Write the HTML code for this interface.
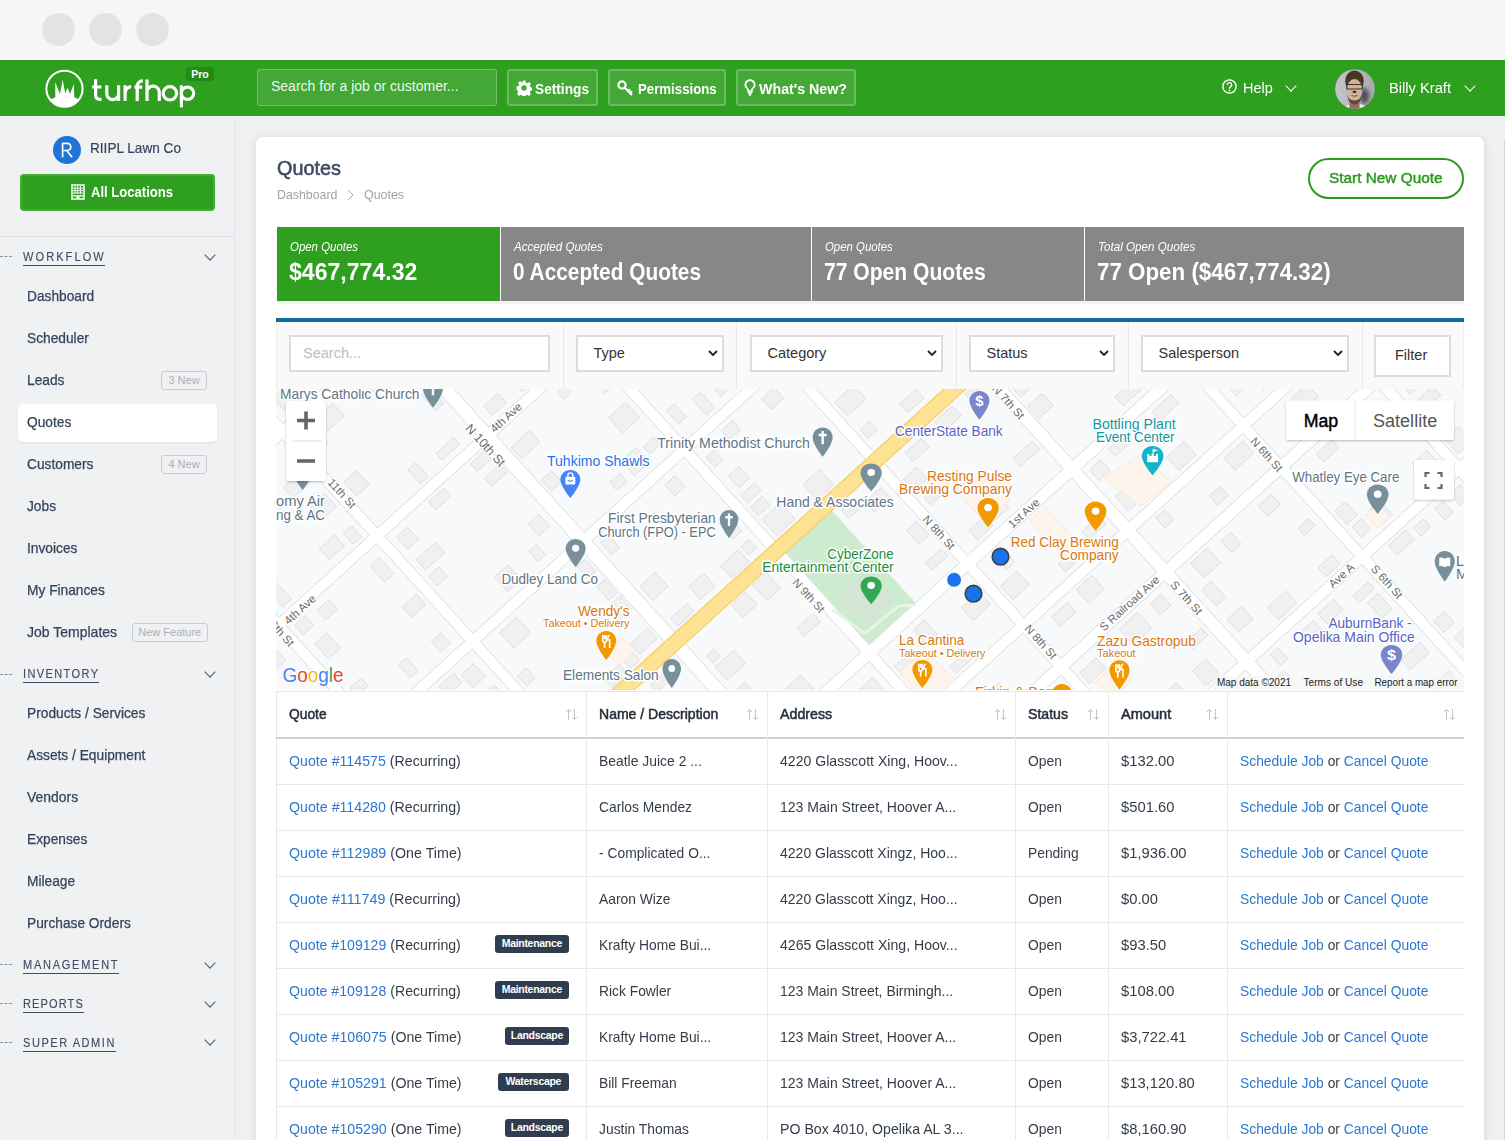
<!DOCTYPE html>
<html><head><meta charset="utf-8">
<style>
*{box-sizing:border-box;margin:0;padding:0}
html,body{width:1505px;height:1140px;overflow:hidden;background:#eef0f2;font-family:"Liberation Sans",sans-serif;color:#3a4656}
.abs{position:absolute}
.t{position:absolute;line-height:1;white-space:nowrap}
#topbar{position:absolute;left:0;top:0;width:1505px;height:60px;background:#f6f6f6}
.dot{position:absolute;top:13.4px;width:33px;height:33px;border-radius:50%;background:#e3e3e3}
#hdr{position:absolute;left:0;top:60px;width:1505px;height:56px;background:#2e9f1f}
.hb{position:absolute;top:69px;height:37px;border:2px solid rgba(255,255,255,.22);background:rgba(255,255,255,.1);border-radius:3px}
.hbt{position:absolute;top:82.5px;font-size:14px;font-weight:bold;color:#fff;line-height:1;white-space:nowrap;letter-spacing:-0.15px}
.chv{position:absolute;width:8px;height:8px;border-right:1.4px solid #fff;border-bottom:1.4px solid #fff;transform:rotate(45deg)}
#side{position:absolute;left:0;top:116px;width:235px;height:1024px;background:#f0f1f3;border-right:1px solid #e2e5ea}
.dash{position:absolute;left:0;width:12px;border-top:1px dashed #8a93a0}
.chev{position:absolute;left:206px;width:8px;height:8px;border-right:1.3px solid #4a566a;border-bottom:1.3px solid #4a566a;transform:rotate(45deg)}
.badge{position:absolute;height:19px;border:1px solid #c9ced6;border-radius:3px;font-size:11px;color:#a9b0ba;line-height:17px;text-align:center;white-space:nowrap}
#card{position:absolute;left:256px;top:137px;width:1228px;height:1020px;background:#fff;border-radius:7px;box-shadow:0 1px 9px rgba(0,0,0,.11)}
.lk{color:#2b78d2}
.bdg{position:absolute;height:17.5px;background:#2f3d4f;border-radius:3px;color:#fff;font-weight:bold;font-size:10.5px;line-height:17.5px;text-align:center;letter-spacing:-0.3px}
</style></head><body>
<div id="topbar"><div class="dot" style="left:42px"></div><div class="dot" style="left:89px"></div><div class="dot" style="left:136px"></div></div>
<div id="hdr"></div>
 <svg class="abs" style="left:0;top:0" width="100" height="116" viewBox="0 0 100 116">
  <circle cx="64.5" cy="88.75" r="18.1" fill="none" stroke="#fff" stroke-width="2"/>
  <path d="M49.9 99.5 L53 98.3 L55.3 97.4 L55.3 82.3 L60 94 L62.7 79.8 L65.2 93 L67.6 87.8 L70 94 L73.7 84.1 L74.4 97.3 L76.5 98.2 L79.1 99.5 A18.1 18.1 0 0 1 49.9 99.5 Z" fill="#fff"/>
 </svg>
 <div class="abs" style="left:186px;top:67px;width:28px;height:14px;background:#248a17;border-radius:3px;color:#fff;font-weight:bold;font-size:10.5px;line-height:14px;text-align:center">Pro</div>
 <div class="abs" style="left:257px;top:69px;width:240px;height:37px;border:1.5px solid rgba(255,255,255,.25);background:rgba(255,255,255,.1);border-radius:3px"></div>
 <div class="hb" style="left:507px;width:91px"></div>
 <div class="hb" style="left:608px;width:118px"></div>
 <div class="hb" style="left:736px;width:120px"></div>
 <svg class="abs" style="left:516px;top:80px" width="16" height="16" viewBox="0 0 16 16"><path fill="#fff" fill-rule="evenodd" d="M6.6 0.5h2.8l.4 2.1 1.4.6 1.8-1.2 2 2-1.2 1.8.6 1.4 2.1.4v2.8l-2.1.4-.6 1.4 1.2 1.8-2 2-1.8-1.2-1.4.6-.4 2.1H6.6l-.4-2.1-1.4-.6-1.8 1.2-2-2 1.2-1.8-.6-1.4L.5 9.4V6.6l2.1-.4.6-1.4L2 3 4 1l1.8 1.2 1.4-.6zM8 5.3A2.7 2.7 0 1 0 8 10.7 2.7 2.7 0 1 0 8 5.3z"/></svg>
 <svg class="abs" style="left:617px;top:80px" width="17" height="16" viewBox="0 0 17 16"><circle cx="5" cy="5" r="3.6" fill="none" stroke="#fff" stroke-width="2.2"/><path d="M7.5 7.5 L15 15 M11 11.2 L13 9.2 M13 13.2 L15 11.2" stroke="#fff" stroke-width="2.2" fill="none"/></svg>
 <svg class="abs" style="left:744px;top:79px" width="12" height="17" viewBox="0 0 12 17"><path d="M6 1.2a4.6 4.6 0 0 0-2.6 8.4c.5.4.8 1 .8 1.6v1.3h3.6v-1.3c0-.6.3-1.2.8-1.6A4.6 4.6 0 0 0 6 1.2z" fill="none" stroke="#fff" stroke-width="1.8"/><path d="M4.2 14.3h3.6M4.8 16h2.4" stroke="#fff" stroke-width="1.5"/></svg>
 <svg class="abs" style="left:1222px;top:79px" width="15" height="15" viewBox="0 0 15 15"><circle cx="7.5" cy="7.5" r="6.6" fill="none" stroke="#fff" stroke-width="1.4"/><path d="M5.3 5.8a2.2 2.2 0 1 1 3.2 2c-.7.4-1 .8-1 1.5v.4" fill="none" stroke="#fff" stroke-width="1.4"/><circle cx="7.5" cy="11.4" r=".9" fill="#fff"/></svg>
 <div class="chv" style="left:1287px;top:82px"></div>
 <svg class="abs" style="left:1335px;top:69px" width="40" height="40" viewBox="0 0 40 40">
  <defs><clipPath id="av"><circle cx="20" cy="20" r="19.8"/></clipPath>
  <filter id="bl" x="-50%" y="-50%" width="200%" height="200%"><feGaussianBlur stdDeviation="0.7"/></filter>
  <filter id="bl2" x="-50%" y="-50%" width="200%" height="200%"><feGaussianBlur stdDeviation="2"/></filter>
  <linearGradient id="avg" x1="0" x2="1" y1="0" y2="0"><stop offset="0" stop-color="#c4c5ca"/><stop offset="1" stop-color="#aaabb1"/></linearGradient></defs>
  <g clip-path="url(#av)">
   <rect width="40" height="40" fill="url(#avg)"/>
   <ellipse cx="29.5" cy="27" rx="4.5" ry="8" fill="#4a4a52" filter="url(#bl2)"/>
   <g filter="url(#bl)">
    <path d="M8 41 C9 37 13 35.5 17 35.5 L25 35.5 C29 35.5 31 37 32 41Z" fill="#eeecea"/>
    <rect x="14.5" y="30" width="10" height="11" fill="#8d6e5c"/>
    <ellipse cx="19.5" cy="12" rx="9.3" ry="10.5" fill="#4a3426"/><ellipse cx="19.5" cy="21" rx="7.8" ry="11" fill="#d3b29c"/><path d="M11.5 14 C13 9.5 16 8.5 19.5 8.5 C23 8.5 26 9.5 27.5 14 L28 9 C25 4 14 4 11 9Z" fill="#4a3426"/>
    <path d="M12 25 C12.5 32 16 35.5 19.5 35.5 C23 35.5 26.5 32 27 25 C26 30 23.5 31.5 19.5 31.5 C15.5 31.5 13 30 12 25Z" fill="#5e4636"/>
    
    <path d="M11.8 15.5h15.5v4.5h-15.5z" fill="none" stroke="#3a302c" stroke-width="1.1"/>
    <path d="M17.8 23.3 Q19.5 22 21.2 23.3" stroke="#2a1e1a" stroke-width="1.6" fill="none"/>
    <path d="M16.5 26.5 Q19.5 28 22.5 26.5" stroke="#7a4a48" stroke-width="1" fill="none"/>
   </g>
  </g>
 </svg>
 <div class="chv" style="left:1466px;top:82px"></div>
 <svg class="abs" style="left:0;top:0" width="210" height="116" viewBox="0 0 210 116"><g fill="none" stroke="#fff" stroke-width="3.2">
 <path d="M95.6 79.2V95.5Q95.6 99.4 101.6 99.4M92.2 87H101.4"/>
 <path d="M106.8 85.3V93.8A5.9 5.9 0 0 0 118.6 93.8M118.6 85.3V100.9"/>
 <path d="M125.1 85.3V100.9M125.1 93A6.4 6.4 0 0 1 131.2 86.6"/>
 <path d="M137.2 100.9V86.3A5.4 5.4 0 0 1 142.8 80.9M134.5 87.1H142.3"/>
 <path d="M147 79.5V100.9M147 92.3A6.15 6.15 0 0 1 159.3 92.3V100.9"/>
 <circle cx="169.9" cy="93.3" r="6.7"/>
 <path d="M181.4 85.3V107.4"/><circle cx="187.5" cy="93.3" r="6.2"/>
</g></svg>
 <div class="t" style="left:271px;top:79.3px;font-size:14px;color:rgba(255,255,255,.93)">Search for a job or customer...</div>
 <div class="t" style="left:534.6px;top:81.2px;font-size:15px;transform:scaleX(0.9126);transform-origin:0 0;color:#fff;font-weight:bold">Settings</div>
 <div class="t" style="left:638px;top:81.2px;font-size:15px;transform:scaleX(0.8822);transform-origin:0 0;color:#fff;font-weight:bold">Permissions</div>
 <div class="t" style="left:759px;top:81.2px;font-size:15px;transform:scaleX(0.9489);transform-origin:0 0;color:#fff;font-weight:bold">What's New?</div>
 <div class="t" style="left:1242.6px;top:80.2px;font-size:15px;transform:scaleX(0.9660);transform-origin:0 0;color:#fff">Help</div>
 <div class="t" style="left:1389px;top:80.2px;font-size:15px;transform:scaleX(0.9787);transform-origin:0 0;color:#fff">Billy Kraft</div>
<div id="side"></div>
 <div class="abs" style="left:53px;top:135.5px;width:28px;height:28px;border-radius:50%;background:#1f74d6"></div>
 <svg class="abs" style="left:0;top:0" width="90" height="170" viewBox="0 0 90 170"><path d="M62.6 156.6V143.3H67.2A3.6 3.6 0 0 1 67.2 150.5H63.2M66.6 150.5L71.6 156.6" fill="none" stroke="#fff" stroke-width="1.7" stroke-linecap="round" stroke-linejoin="round"/></svg>
 <div class="t" style="left:90px;top:140.7px;font-size:14.5px;transform:scaleX(0.9383);transform-origin:0 0;color:#34445a;-webkit-text-stroke:0.2px #34445a">RIIPL Lawn Co</div>
 <div class="abs" style="left:20px;top:174px;width:195px;height:37px;background:#2e9f1f;border:2px solid #45ab36;border-radius:4px"></div>
 <svg class="abs" style="left:71px;top:184px" width="14" height="16" viewBox="0 0 14 16"><rect x="1" y="1" width="12" height="14" fill="none" stroke="#fff" stroke-width="1.5"/><path d="M4 2v8M6.7 2v8M9.4 2v8M2 4.2h10M2 6.6h10M2 9h10" stroke="#fff" stroke-width="0.9"/><rect x="2" y="11.2" width="10" height="1.3" fill="#fff"/><rect x="5.5" y="12.3" width="3" height="2.5" fill="#fff"/></svg>
 <div class="t" style="left:91px;top:185.1px;font-size:14px;transform:scaleX(0.9329);transform-origin:0 0;color:#fff;font-weight:bold">All Locations</div>
 <div class="abs" style="left:0;top:236px;width:234px;height:1px;background:#dfe3e8"></div>
 <div class="dash" style="top:256.3px"></div>
 <div class="t" style="left:23px;top:250.6px;font-size:12.8px;letter-spacing:2.435px;transform:scaleX(0.86);transform-origin:0 0;color:#3e4d63;-webkit-text-stroke:0.15px #3e4d63">WORKFLOW</div>
 <div class="abs" style="left:23px;top:265px;width:81.9px;height:1.2px;background:#3e4d63"></div>
 <div class="chev" style="top:250.5px"></div>
 <div class="t" style="left:27px;top:288.8px;font-size:14.3px;transform:scaleX(0.9610);transform-origin:0 0;color:#33435a;-webkit-text-stroke:0.25px #33435a">Dashboard</div>
 <div class="t" style="left:27px;top:330.8px;font-size:14.3px;transform:scaleX(0.9610);transform-origin:0 0;color:#33435a;-webkit-text-stroke:0.25px #33435a">Scheduler</div>
 <div class="t" style="left:27px;top:372.8px;font-size:14.3px;transform:scaleX(0.9610);transform-origin:0 0;color:#33435a;-webkit-text-stroke:0.25px #33435a">Leads</div>
 <div class="abs" style="left:18px;top:404px;width:199px;height:38px;background:#fff;border-radius:5px;box-shadow:0 1px 2px rgba(0,0,0,.08)"></div>
 <div class="t" style="left:27px;top:414.8px;font-size:14.3px;transform:scaleX(0.9610);transform-origin:0 0;color:#33435a;-webkit-text-stroke:0.25px #33435a">Quotes</div>
 <div class="t" style="left:27px;top:456.8px;font-size:14.3px;transform:scaleX(0.9610);transform-origin:0 0;color:#33435a;-webkit-text-stroke:0.25px #33435a">Customers</div>
 <div class="t" style="left:27px;top:498.8px;font-size:14.3px;transform:scaleX(0.9610);transform-origin:0 0;color:#33435a;-webkit-text-stroke:0.25px #33435a">Jobs</div>
 <div class="t" style="left:27px;top:540.8px;font-size:14.3px;transform:scaleX(0.9610);transform-origin:0 0;color:#33435a;-webkit-text-stroke:0.25px #33435a">Invoices</div>
 <div class="t" style="left:27px;top:582.8px;font-size:14.3px;transform:scaleX(0.9610);transform-origin:0 0;color:#33435a;-webkit-text-stroke:0.25px #33435a">My Finances</div>
 <div class="t" style="left:27px;top:624.8px;font-size:14.3px;transform:scaleX(0.9803);transform-origin:0 0;color:#33435a;-webkit-text-stroke:0.25px #33435a">Job Templates</div>
 <div class="badge" style="left:161px;top:371.3px;width:46.0px">3 New</div>
 <div class="badge" style="left:161px;top:455.3px;width:46.0px">4 New</div>
 <div class="badge" style="left:132px;top:623.3px;width:75.5px">New Feature</div>
 <div class="dash" style="top:673.6px"></div>
 <div class="t" style="left:23px;top:667.9px;font-size:12.8px;letter-spacing:1.625px;transform:scaleX(0.86);transform-origin:0 0;color:#3e4d63;-webkit-text-stroke:0.15px #3e4d63">INVENTORY</div>
 <div class="abs" style="left:23px;top:682px;width:76.2px;height:1.2px;background:#3e4d63"></div>
 <div class="chev" style="top:667.8px"></div>
 <div class="t" style="left:27px;top:705.5px;font-size:14.3px;transform:scaleX(0.9610);transform-origin:0 0;color:#33435a;-webkit-text-stroke:0.25px #33435a">Products / Services</div>
 <div class="t" style="left:27px;top:747.5px;font-size:14.3px;transform:scaleX(0.9610);transform-origin:0 0;color:#33435a;-webkit-text-stroke:0.25px #33435a">Assets / Equipment</div>
 <div class="t" style="left:27px;top:789.5px;font-size:14.3px;transform:scaleX(0.9754);transform-origin:0 0;color:#33435a;-webkit-text-stroke:0.25px #33435a">Vendors</div>
 <div class="t" style="left:27px;top:831.5px;font-size:14.3px;transform:scaleX(0.9610);transform-origin:0 0;color:#33435a;-webkit-text-stroke:0.25px #33435a">Expenses</div>
 <div class="t" style="left:27px;top:873.5px;font-size:14.3px;transform:scaleX(0.9610);transform-origin:0 0;color:#33435a;-webkit-text-stroke:0.25px #33435a">Mileage</div>
 <div class="t" style="left:27px;top:915.5px;font-size:14.3px;transform:scaleX(0.9610);transform-origin:0 0;color:#33435a;-webkit-text-stroke:0.25px #33435a">Purchase Orders</div>
 <div class="dash" style="top:964.3px"></div>
 <div class="t" style="left:23px;top:958.6px;font-size:12.8px;letter-spacing:2.029px;transform:scaleX(0.86);transform-origin:0 0;color:#3e4d63;-webkit-text-stroke:0.15px #3e4d63">MANAGEMENT</div>
 <div class="abs" style="left:23px;top:973px;width:95.8px;height:1.2px;background:#3e4d63"></div>
 <div class="chev" style="top:958.5px"></div>
 <div class="dash" style="top:1003.3px"></div>
 <div class="t" style="left:23px;top:997.6px;font-size:12.8px;letter-spacing:1.315px;transform:scaleX(0.86);transform-origin:0 0;color:#3e4d63;-webkit-text-stroke:0.15px #3e4d63">REPORTS</div>
 <div class="abs" style="left:23px;top:1012px;width:61.0px;height:1.2px;background:#3e4d63"></div>
 <div class="chev" style="top:997.5px"></div>
 <div class="dash" style="top:1042.2px"></div>
 <div class="t" style="left:23px;top:1036.5px;font-size:12.8px;letter-spacing:1.808px;transform:scaleX(0.86);transform-origin:0 0;color:#3e4d63;-webkit-text-stroke:0.15px #3e4d63">SUPER ADMIN</div>
 <div class="abs" style="left:23px;top:1051px;width:92.6px;height:1.2px;background:#3e4d63"></div>
 <div class="chev" style="top:1036.4px"></div>
<div id="card"></div>
 <div class="t" style="left:276.5px;top:157.6px;font-size:20.5px;transform:scaleX(0.9653);transform-origin:0 0;color:#3d4c62;-webkit-text-stroke:0.6px #3d4c62">Quotes</div>
 <div class="t" style="left:276.8px;top:187.9px;font-size:13px;transform:scaleX(0.9497);transform-origin:0 0;color:#a3a3a3">Dashboard</div>
 <svg class="abs" style="left:346px;top:189px" width="9" height="12" viewBox="0 0 9 12"><path d="M2 1l5 5-5 5" fill="none" stroke="#a8a8a8" stroke-width="1"/></svg>
 <div class="t" style="left:364.2px;top:187.9px;font-size:13px;transform:scaleX(0.9543);transform-origin:0 0;color:#a3a3a3">Quotes</div>
 <div class="abs" style="left:1308px;top:158px;width:156px;height:41px;border:2px solid #2a9a1c;border-radius:21px"></div>
 <div class="t" style="left:1329.4px;top:169.9px;font-size:15.3px;transform:scaleX(1.0044);transform-origin:0 0;color:#2a9a1c;-webkit-text-stroke:0.45px #2a9a1c">Start New Quote</div>
 <div class="abs" style="left:277px;top:300px;width:1187px;height:4px;background:#f3f3f3"></div>
 <div class="abs" style="left:277px;top:227px;width:223px;height:74px;background:#2e9f1f"></div>
 <div class="t" style="left:290px;top:240.8px;font-size:12px;transform:scaleX(0.9527);transform-origin:0 0;color:#fff;font-style:italic">Open Quotes</div>
 <div class="t" style="left:289.3px;top:260.7px;font-size:23px;transform:scaleX(1.0031);transform-origin:0 0;color:#fff;font-weight:bold">$467,774.32</div>
 <div class="abs" style="left:501px;top:227px;width:310px;height:74px;background:#878787"></div>
 <div class="t" style="left:514px;top:240.8px;font-size:12px;transform:scaleX(0.9635);transform-origin:0 0;color:#fff;font-style:italic">Accepted Quotes</div>
 <div class="t" style="left:513.3px;top:260.7px;font-size:23px;transform:scaleX(0.9061);transform-origin:0 0;color:#fff;font-weight:bold">0 Accepted Quotes</div>
 <div class="abs" style="left:812px;top:227px;width:272px;height:74px;background:#878787"></div>
 <div class="t" style="left:825px;top:240.8px;font-size:12px;transform:scaleX(0.9499);transform-origin:0 0;color:#fff;font-style:italic">Open Quotes</div>
 <div class="t" style="left:824.3px;top:260.7px;font-size:23px;transform:scaleX(0.9168);transform-origin:0 0;color:#fff;font-weight:bold">77 Open Quotes</div>
 <div class="abs" style="left:1085px;top:227px;width:379px;height:74px;background:#878787"></div>
 <div class="t" style="left:1098px;top:240.8px;font-size:12px;transform:scaleX(0.9702);transform-origin:0 0;color:#fff;font-style:italic">Total Open Quotes</div>
 <div class="t" style="left:1097.3px;top:260.7px;font-size:23px;transform:scaleX(0.9718);transform-origin:0 0;color:#fff;font-weight:bold">77 Open ($467,774.32)</div>
 <div class="abs" style="left:276px;top:318px;width:1188px;height:4px;background:#0f6e98"></div>
 <div class="abs" style="left:276px;top:322px;width:1188px;height:68px;background:#f9f9f9;border-left:1px solid #ececec;border-right:1px solid #ececec"></div>
 <div class="abs" style="left:562.5px;top:322px;width:1px;height:67px;background:#e9e9e9"></div>
 <div class="abs" style="left:736.0px;top:322px;width:1px;height:67px;background:#e9e9e9"></div>
 <div class="abs" style="left:955.5px;top:322px;width:1px;height:67px;background:#e9e9e9"></div>
 <div class="abs" style="left:1127.5px;top:322px;width:1px;height:67px;background:#e9e9e9"></div>
 <div class="abs" style="left:1361.5px;top:322px;width:1px;height:67px;background:#e9e9e9"></div>
 <div class="abs" style="left:289px;top:335px;width:261px;height:37px;border:2px solid #dcdcdc;background:#fff"></div>
 <div class="t" style="left:303px;top:345.6px;font-size:14.5px;color:#bdbdbd">Search...</div>
 <div class="abs" style="left:575.5px;top:335px;width:148.5px;height:37px;border:2px solid #dcdcdc;background:#fff"></div>
 <div class="t" style="left:593.5px;top:346.0px;font-size:14.5px;color:#333">Type</div>
 <svg class="abs" style="left:708.0px;top:350px" width="10" height="7" viewBox="0 0 10 7"><path d="M1 1l4 4 4-4" fill="none" stroke="#222" stroke-width="1.8"/></svg>
 <div class="abs" style="left:749.5px;top:335px;width:193.0px;height:37px;border:2px solid #dcdcdc;background:#fff"></div>
 <div class="t" style="left:767.5px;top:346.0px;font-size:14.5px;color:#333">Category</div>
 <svg class="abs" style="left:926.5px;top:350px" width="10" height="7" viewBox="0 0 10 7"><path d="M1 1l4 4 4-4" fill="none" stroke="#222" stroke-width="1.8"/></svg>
 <div class="abs" style="left:968.5px;top:335px;width:146.5px;height:37px;border:2px solid #dcdcdc;background:#fff"></div>
 <div class="t" style="left:986.5px;top:346.0px;font-size:14.5px;color:#333">Status</div>
 <svg class="abs" style="left:1099.0px;top:350px" width="10" height="7" viewBox="0 0 10 7"><path d="M1 1l4 4 4-4" fill="none" stroke="#222" stroke-width="1.8"/></svg>
 <div class="abs" style="left:1140.5px;top:335px;width:208.5px;height:37px;border:2px solid #dcdcdc;background:#fff"></div>
 <div class="t" style="left:1158.5px;top:346.0px;font-size:14.5px;color:#333">Salesperson</div>
 <svg class="abs" style="left:1333.0px;top:350px" width="10" height="7" viewBox="0 0 10 7"><path d="M1 1l4 4 4-4" fill="none" stroke="#222" stroke-width="1.8"/></svg>
 <div class="abs" style="left:1374px;top:335px;width:77px;height:42px;border:2px solid #dcdcdc;background:#fff"></div>
 <div class="t" style="left:1395px;top:348.0px;font-size:14.5px;color:#333">Filter</div>
<svg class="abs" style="left:276px;top:389px" width="1188" height="301" viewBox="0 0 1188 301" font-family="Liberation Sans, sans-serif">
<rect width="1188" height="301" fill="#f8f9fa"/>
<g transform="rotate(-42.2)">
<rect x="260.0" y="463.0" width="70.0" height="135.0" fill="#cdeccf"/>
<rect x="-210.3" y="12.8" width="15.2" height="11.0" fill="#f0f0f1" stroke="#dcdde0" stroke-width="0.9"/>
<rect x="-192.0" y="-47.1" width="24.6" height="11.8" fill="#f0f0f1" stroke="#dcdde0" stroke-width="0.9"/>
<rect x="-247.7" y="5.3" width="19.0" height="21.3" fill="#f0f0f1" stroke="#dcdde0" stroke-width="0.9"/>
<rect x="-182.8" y="104.6" width="13.5" height="16.2" fill="#f0f0f1" stroke="#dcdde0" stroke-width="0.9"/>
<rect x="-214.8" y="46.1" width="20.9" height="10.3" fill="#f0f0f1" stroke="#dcdde0" stroke-width="0.9"/>
<rect x="-227.5" y="149.5" width="19.9" height="15.5" fill="#f0f0f1" stroke="#dcdde0" stroke-width="0.9"/>
<rect x="-188.8" y="154.6" width="14.0" height="11.3" fill="#f0f0f1" stroke="#dcdde0" stroke-width="0.9"/>
<rect x="-248.2" y="96.8" width="16.2" height="17.7" fill="#f0f0f1" stroke="#dcdde0" stroke-width="0.9"/>
<rect x="-245.2" y="149.5" width="13.5" height="12.7" fill="#f0f0f1" stroke="#dcdde0" stroke-width="0.9"/>
<rect x="-203.1" y="288.7" width="17.2" height="16.1" fill="#f0f0f1" stroke="#dcdde0" stroke-width="0.9"/>
<rect x="-249.6" y="210.4" width="25.8" height="17.9" fill="#f0f0f1" stroke="#dcdde0" stroke-width="0.9"/>
<rect x="-245.8" y="236.5" width="19.8" height="13.1" fill="#f0f0f1" stroke="#dcdde0" stroke-width="0.9"/>
<rect x="-244.7" y="286.2" width="23.9" height="21.4" fill="#f0f0f1" stroke="#dcdde0" stroke-width="0.9"/>
<rect x="-187.1" y="254.5" width="20.1" height="9.8" fill="#f0f0f1" stroke="#dcdde0" stroke-width="0.9"/>
<rect x="-186.9" y="191.4" width="11.6" height="16.4" fill="#f0f0f1" stroke="#dcdde0" stroke-width="0.9"/>
<rect x="-248.9" y="340.5" width="19.8" height="10.9" fill="#f0f0f1" stroke="#dcdde0" stroke-width="0.9"/>
<rect x="-184.7" y="400.0" width="17.8" height="21.7" fill="#f0f0f1" stroke="#dcdde0" stroke-width="0.9"/>
<rect x="-241.1" y="423.3" width="17.7" height="18.0" fill="#f0f0f1" stroke="#dcdde0" stroke-width="0.9"/>
<rect x="-216.6" y="432.5" width="18.7" height="9.4" fill="#f0f0f1" stroke="#dcdde0" stroke-width="0.9"/>
<rect x="-247.8" y="392.6" width="24.5" height="13.6" fill="#f0f0f1" stroke="#dcdde0" stroke-width="0.9"/>
<rect x="-249.6" y="485.2" width="22.6" height="18.9" fill="#f0f0f1" stroke="#dcdde0" stroke-width="0.9"/>
<rect x="-204.5" y="469.7" width="17.9" height="18.5" fill="#f0f0f1" stroke="#dcdde0" stroke-width="0.9"/>
<rect x="-246.2" y="564.5" width="25.3" height="14.8" fill="#f0f0f1" stroke="#dcdde0" stroke-width="0.9"/>
<rect x="-248.1" y="515.3" width="11.6" height="15.1" fill="#f0f0f1" stroke="#dcdde0" stroke-width="0.9"/>
<rect x="-184.7" y="511.7" width="12.9" height="19.3" fill="#f0f0f1" stroke="#dcdde0" stroke-width="0.9"/>
<rect x="-188.1" y="553.6" width="21.9" height="10.1" fill="#f0f0f1" stroke="#dcdde0" stroke-width="0.9"/>
<rect x="-249.4" y="606.9" width="12.3" height="19.7" fill="#f0f0f1" stroke="#dcdde0" stroke-width="0.9"/>
<rect x="-246.5" y="641.5" width="22.8" height="18.4" fill="#f0f0f1" stroke="#dcdde0" stroke-width="0.9"/>
<rect x="-182.9" y="631.7" width="13.4" height="12.3" fill="#f0f0f1" stroke="#dcdde0" stroke-width="0.9"/>
<rect x="-200.0" y="710.2" width="23.3" height="9.8" fill="#f0f0f1" stroke="#dcdde0" stroke-width="0.9"/>
<rect x="-247.9" y="798.2" width="24.1" height="10.7" fill="#f0f0f1" stroke="#dcdde0" stroke-width="0.9"/>
<rect x="-247.3" y="772.0" width="22.4" height="10.9" fill="#f0f0f1" stroke="#dcdde0" stroke-width="0.9"/>
<rect x="-238.2" y="742.6" width="18.3" height="16.2" fill="#f0f0f1" stroke="#dcdde0" stroke-width="0.9"/>
<rect x="-217.9" y="826.7" width="19.8" height="15.6" fill="#f0f0f1" stroke="#dcdde0" stroke-width="0.9"/>
<rect x="-191.3" y="747.6" width="14.0" height="15.8" fill="#f0f0f1" stroke="#dcdde0" stroke-width="0.9"/>
<rect x="-250.6" y="905.0" width="12.2" height="10.6" fill="#f0f0f1" stroke="#dcdde0" stroke-width="0.9"/>
<rect x="-241.0" y="1056.5" width="14.8" height="10.6" fill="#f0f0f1" stroke="#dcdde0" stroke-width="0.9"/>
<rect x="-192.5" y="893.3" width="24.1" height="21.6" fill="#f0f0f1" stroke="#dcdde0" stroke-width="0.9"/>
<rect x="-247.7" y="935.9" width="15.1" height="18.4" fill="#f0f0f1" stroke="#dcdde0" stroke-width="0.9"/>
<rect x="-186.2" y="863.7" width="18.3" height="12.8" fill="#f0f0f1" stroke="#dcdde0" stroke-width="0.9"/>
<rect x="-246.3" y="1023.3" width="11.7" height="12.5" fill="#f0f0f1" stroke="#dcdde0" stroke-width="0.9"/>
<rect x="-208.0" y="1050.0" width="23.6" height="17.8" fill="#f0f0f1" stroke="#dcdde0" stroke-width="0.9"/>
<rect x="-204.3" y="865.6" width="11.4" height="9.7" fill="#f0f0f1" stroke="#dcdde0" stroke-width="0.9"/>
<rect x="-250.9" y="866.6" width="18.0" height="11.3" fill="#f0f0f1" stroke="#dcdde0" stroke-width="0.9"/>
<rect x="-228.3" y="864.8" width="18.7" height="20.6" fill="#f0f0f1" stroke="#dcdde0" stroke-width="0.9"/>
<rect x="-71.0" y="-48.6" width="23.3" height="18.2" fill="#f0f0f1" stroke="#dcdde0" stroke-width="0.9"/>
<rect x="-56.5" y="9.5" width="10.2" height="17.1" fill="#f0f0f1" stroke="#dcdde0" stroke-width="0.9"/>
<rect x="-146.2" y="-33.4" width="20.7" height="12.7" fill="#f0f0f1" stroke="#dcdde0" stroke-width="0.9"/>
<rect x="-142.1" y="11.1" width="10.1" height="13.7" fill="#f0f0f1" stroke="#dcdde0" stroke-width="0.9"/>
<rect x="-145.3" y="-15.6" width="20.2" height="21.5" fill="#f0f0f1" stroke="#dcdde0" stroke-width="0.9"/>
<rect x="-143.2" y="115.8" width="20.9" height="15.4" fill="#f0f0f1" stroke="#dcdde0" stroke-width="0.9"/>
<rect x="-147.6" y="69.0" width="11.1" height="18.6" fill="#f0f0f1" stroke="#dcdde0" stroke-width="0.9"/>
<rect x="-75.2" y="147.3" width="20.4" height="15.0" fill="#f0f0f1" stroke="#dcdde0" stroke-width="0.9"/>
<rect x="-54.1" y="110.4" width="19.9" height="17.4" fill="#f0f0f1" stroke="#dcdde0" stroke-width="0.9"/>
<rect x="-47.1" y="151.9" width="11.4" height="15.1" fill="#f0f0f1" stroke="#dcdde0" stroke-width="0.9"/>
<rect x="-96.6" y="50.3" width="12.1" height="19.7" fill="#f0f0f1" stroke="#dcdde0" stroke-width="0.9"/>
<rect x="-60.8" y="77.8" width="24.0" height="14.1" fill="#f0f0f1" stroke="#dcdde0" stroke-width="0.9"/>
<rect x="-141.3" y="144.9" width="11.9" height="21.0" fill="#f0f0f1" stroke="#dcdde0" stroke-width="0.9"/>
<rect x="-142.4" y="214.9" width="16.2" height="20.3" fill="#f0f0f1" stroke="#dcdde0" stroke-width="0.9"/>
<rect x="-94.6" y="286.6" width="10.8" height="17.6" fill="#f0f0f1" stroke="#dcdde0" stroke-width="0.9"/>
<rect x="-54.6" y="291.3" width="13.0" height="13.9" fill="#f0f0f1" stroke="#dcdde0" stroke-width="0.9"/>
<rect x="-118.0" y="191.6" width="15.5" height="12.9" fill="#f0f0f1" stroke="#dcdde0" stroke-width="0.9"/>
<rect x="-52.9" y="246.3" width="18.9" height="14.1" fill="#f0f0f1" stroke="#dcdde0" stroke-width="0.9"/>
<rect x="-146.4" y="271.2" width="15.5" height="10.2" fill="#f0f0f1" stroke="#dcdde0" stroke-width="0.9"/>
<rect x="-49.3" y="194.4" width="12.4" height="21.6" fill="#f0f0f1" stroke="#dcdde0" stroke-width="0.9"/>
<rect x="-145.0" y="187.2" width="14.5" height="13.1" fill="#f0f0f1" stroke="#dcdde0" stroke-width="0.9"/>
<rect x="-54.6" y="336.2" width="16.6" height="17.4" fill="#f0f0f1" stroke="#dcdde0" stroke-width="0.9"/>
<rect x="-50.5" y="365.9" width="13.6" height="14.5" fill="#f0f0f1" stroke="#dcdde0" stroke-width="0.9"/>
<rect x="-49.4" y="434.6" width="16.3" height="9.1" fill="#f0f0f1" stroke="#dcdde0" stroke-width="0.9"/>
<rect x="-142.2" y="402.5" width="12.3" height="14.1" fill="#f0f0f1" stroke="#dcdde0" stroke-width="0.9"/>
<rect x="-145.2" y="433.5" width="21.3" height="11.5" fill="#f0f0f1" stroke="#dcdde0" stroke-width="0.9"/>
<rect x="-79.1" y="329.9" width="19.9" height="12.4" fill="#f0f0f1" stroke="#dcdde0" stroke-width="0.9"/>
<rect x="-143.3" y="369.5" width="15.2" height="13.2" fill="#f0f0f1" stroke="#dcdde0" stroke-width="0.9"/>
<rect x="-57.1" y="470.0" width="11.6" height="15.2" fill="#f0f0f1" stroke="#dcdde0" stroke-width="0.9"/>
<rect x="-110.2" y="470.0" width="13.7" height="9.7" fill="#f0f0f1" stroke="#dcdde0" stroke-width="0.9"/>
<rect x="-143.3" y="532.0" width="23.9" height="14.8" fill="#f0f0f1" stroke="#dcdde0" stroke-width="0.9"/>
<rect x="-130.7" y="561.7" width="21.7" height="20.9" fill="#f0f0f1" stroke="#dcdde0" stroke-width="0.9"/>
<rect x="-45.2" y="510.8" width="10.1" height="20.7" fill="#f0f0f1" stroke="#dcdde0" stroke-width="0.9"/>
<rect x="-89.2" y="468.8" width="12.6" height="9.2" fill="#f0f0f1" stroke="#dcdde0" stroke-width="0.9"/>
<rect x="-145.8" y="469.5" width="16.4" height="9.9" fill="#f0f0f1" stroke="#dcdde0" stroke-width="0.9"/>
<rect x="-144.3" y="486.4" width="22.5" height="9.3" fill="#f0f0f1" stroke="#dcdde0" stroke-width="0.9"/>
<rect x="-142.1" y="608.5" width="25.7" height="15.4" fill="#f0f0f1" stroke="#dcdde0" stroke-width="0.9"/>
<rect x="-50.0" y="609.6" width="15.6" height="18.8" fill="#f0f0f1" stroke="#dcdde0" stroke-width="0.9"/>
<rect x="-130.8" y="651.8" width="13.2" height="14.2" fill="#f0f0f1" stroke="#dcdde0" stroke-width="0.9"/>
<rect x="-96.5" y="655.3" width="22.6" height="10.5" fill="#f0f0f1" stroke="#dcdde0" stroke-width="0.9"/>
<rect x="-55.8" y="698.9" width="19.3" height="20.5" fill="#f0f0f1" stroke="#dcdde0" stroke-width="0.9"/>
<rect x="-147.1" y="696.7" width="15.9" height="13.9" fill="#f0f0f1" stroke="#dcdde0" stroke-width="0.9"/>
<rect x="-47.1" y="803.8" width="12.8" height="18.7" fill="#f0f0f1" stroke="#dcdde0" stroke-width="0.9"/>
<rect x="-116.7" y="833.0" width="12.1" height="12.0" fill="#f0f0f1" stroke="#dcdde0" stroke-width="0.9"/>
<rect x="-141.8" y="743.5" width="17.6" height="10.8" fill="#f0f0f1" stroke="#dcdde0" stroke-width="0.9"/>
<rect x="-143.1" y="797.0" width="12.3" height="17.7" fill="#f0f0f1" stroke="#dcdde0" stroke-width="0.9"/>
<rect x="-65.2" y="744.4" width="24.5" height="9.6" fill="#f0f0f1" stroke="#dcdde0" stroke-width="0.9"/>
<rect x="-63.7" y="825.6" width="11.7" height="17.0" fill="#f0f0f1" stroke="#dcdde0" stroke-width="0.9"/>
<rect x="-50.8" y="1002.5" width="12.8" height="13.0" fill="#f0f0f1" stroke="#dcdde0" stroke-width="0.9"/>
<rect x="-129.5" y="1046.6" width="10.1" height="20.0" fill="#f0f0f1" stroke="#dcdde0" stroke-width="0.9"/>
<rect x="-84.4" y="1053.3" width="25.9" height="12.4" fill="#f0f0f1" stroke="#dcdde0" stroke-width="0.9"/>
<rect x="-50.1" y="919.7" width="14.3" height="16.2" fill="#f0f0f1" stroke="#dcdde0" stroke-width="0.9"/>
<rect x="-145.0" y="1020.7" width="24.9" height="20.6" fill="#f0f0f1" stroke="#dcdde0" stroke-width="0.9"/>
<rect x="-109.3" y="864.2" width="13.2" height="11.1" fill="#f0f0f1" stroke="#dcdde0" stroke-width="0.9"/>
<rect x="-137.4" y="864.0" width="16.3" height="16.6" fill="#f0f0f1" stroke="#dcdde0" stroke-width="0.9"/>
<rect x="-147.8" y="998.6" width="24.9" height="13.5" fill="#f0f0f1" stroke="#dcdde0" stroke-width="0.9"/>
<rect x="-65.7" y="865.2" width="21.8" height="9.9" fill="#f0f0f1" stroke="#dcdde0" stroke-width="0.9"/>
<rect x="-145.8" y="1049.7" width="12.1" height="19.3" fill="#f0f0f1" stroke="#dcdde0" stroke-width="0.9"/>
<rect x="-57.2" y="956.1" width="19.9" height="9.4" fill="#f0f0f1" stroke="#dcdde0" stroke-width="0.9"/>
<rect x="-146.0" y="962.3" width="21.0" height="12.3" fill="#f0f0f1" stroke="#dcdde0" stroke-width="0.9"/>
<rect x="-142.3" y="895.0" width="19.6" height="13.5" fill="#f0f0f1" stroke="#dcdde0" stroke-width="0.9"/>
<rect x="-50.8" y="1041.5" width="16.7" height="18.1" fill="#f0f0f1" stroke="#dcdde0" stroke-width="0.9"/>
<rect x="89.6" y="-48.6" width="18.4" height="11.8" fill="#f0f0f1" stroke="#dcdde0" stroke-width="0.9"/>
<rect x="-10.8" y="-30.3" width="11.1" height="19.4" fill="#f0f0f1" stroke="#dcdde0" stroke-width="0.9"/>
<rect x="94.4" y="-11.1" width="17.5" height="19.2" fill="#f0f0f1" stroke="#dcdde0" stroke-width="0.9"/>
<rect x="39.5" y="3.6" width="17.7" height="19.5" fill="#f0f0f1" stroke="#dcdde0" stroke-width="0.9"/>
<rect x="-8.2" y="4.1" width="16.9" height="17.3" fill="#f0f0f1" stroke="#dcdde0" stroke-width="0.9"/>
<rect x="55.9" y="45.8" width="23.2" height="20.8" fill="#f0f0f1" stroke="#dcdde0" stroke-width="0.9"/>
<rect x="-11.1" y="65.9" width="13.4" height="9.9" fill="#f0f0f1" stroke="#dcdde0" stroke-width="0.9"/>
<rect x="-12.3" y="114.2" width="17.2" height="19.2" fill="#f0f0f1" stroke="#dcdde0" stroke-width="0.9"/>
<rect x="75.2" y="155.2" width="23.8" height="9.1" fill="#f0f0f1" stroke="#dcdde0" stroke-width="0.9"/>
<rect x="-12.3" y="45.5" width="16.0" height="14.4" fill="#f0f0f1" stroke="#dcdde0" stroke-width="0.9"/>
<rect x="43.4" y="148.6" width="10.7" height="18.6" fill="#f0f0f1" stroke="#dcdde0" stroke-width="0.9"/>
<rect x="99.3" y="59.2" width="15.5" height="11.6" fill="#f0f0f1" stroke="#dcdde0" stroke-width="0.9"/>
<rect x="7.9" y="48.8" width="24.6" height="17.0" fill="#f0f0f1" stroke="#dcdde0" stroke-width="0.9"/>
<rect x="103.6" y="102.1" width="11.6" height="21.1" fill="#f0f0f1" stroke="#dcdde0" stroke-width="0.9"/>
<rect x="-12.8" y="241.1" width="14.1" height="12.9" fill="#f0f0f1" stroke="#dcdde0" stroke-width="0.9"/>
<rect x="35.5" y="286.1" width="18.4" height="19.7" fill="#f0f0f1" stroke="#dcdde0" stroke-width="0.9"/>
<rect x="78.1" y="290.1" width="10.2" height="14.0" fill="#f0f0f1" stroke="#dcdde0" stroke-width="0.9"/>
<rect x="93.5" y="186.2" width="18.8" height="10.1" fill="#f0f0f1" stroke="#dcdde0" stroke-width="0.9"/>
<rect x="37.1" y="186.2" width="20.9" height="10.6" fill="#f0f0f1" stroke="#dcdde0" stroke-width="0.9"/>
<rect x="96.1" y="269.2" width="14.4" height="16.4" fill="#f0f0f1" stroke="#dcdde0" stroke-width="0.9"/>
<rect x="-10.0" y="190.5" width="14.6" height="16.5" fill="#f0f0f1" stroke="#dcdde0" stroke-width="0.9"/>
<rect x="-10.9" y="220.6" width="26.0" height="13.9" fill="#f0f0f1" stroke="#dcdde0" stroke-width="0.9"/>
<rect x="94.2" y="206.5" width="21.3" height="10.2" fill="#f0f0f1" stroke="#dcdde0" stroke-width="0.9"/>
<rect x="91.4" y="427.0" width="23.6" height="13.8" fill="#f0f0f1" stroke="#dcdde0" stroke-width="0.9"/>
<rect x="103.5" y="333.7" width="10.9" height="16.2" fill="#f0f0f1" stroke="#dcdde0" stroke-width="0.9"/>
<rect x="75.0" y="426.4" width="12.3" height="18.8" fill="#f0f0f1" stroke="#dcdde0" stroke-width="0.9"/>
<rect x="-14.0" y="374.7" width="11.7" height="13.2" fill="#f0f0f1" stroke="#dcdde0" stroke-width="0.9"/>
<rect x="2.2" y="330.8" width="22.9" height="20.9" fill="#f0f0f1" stroke="#dcdde0" stroke-width="0.9"/>
<rect x="98.0" y="384.4" width="17.6" height="17.2" fill="#f0f0f1" stroke="#dcdde0" stroke-width="0.9"/>
<rect x="2.5" y="429.9" width="11.6" height="12.8" fill="#f0f0f1" stroke="#dcdde0" stroke-width="0.9"/>
<rect x="104.6" y="361.7" width="11.1" height="18.5" fill="#f0f0f1" stroke="#dcdde0" stroke-width="0.9"/>
<rect x="48.6" y="434.6" width="20.6" height="12.2" fill="#f0f0f1" stroke="#dcdde0" stroke-width="0.9"/>
<rect x="61.7" y="570.9" width="23.7" height="13.6" fill="#f0f0f1" stroke="#dcdde0" stroke-width="0.9"/>
<rect x="-10.4" y="494.1" width="23.1" height="20.3" fill="#f0f0f1" stroke="#dcdde0" stroke-width="0.9"/>
<rect x="-14.5" y="467.1" width="11.7" height="18.5" fill="#f0f0f1" stroke="#dcdde0" stroke-width="0.9"/>
<rect x="87.4" y="518.0" width="24.8" height="18.6" fill="#f0f0f1" stroke="#dcdde0" stroke-width="0.9"/>
<rect x="36.2" y="469.3" width="21.2" height="10.3" fill="#f0f0f1" stroke="#dcdde0" stroke-width="0.9"/>
<rect x="-14.0" y="552.1" width="19.4" height="18.9" fill="#f0f0f1" stroke="#dcdde0" stroke-width="0.9"/>
<rect x="97.3" y="551.9" width="13.8" height="13.4" fill="#f0f0f1" stroke="#dcdde0" stroke-width="0.9"/>
<rect x="78.6" y="470.7" width="23.6" height="9.7" fill="#f0f0f1" stroke="#dcdde0" stroke-width="0.9"/>
<rect x="-13.6" y="521.0" width="20.6" height="9.2" fill="#f0f0f1" stroke="#dcdde0" stroke-width="0.9"/>
<rect x="82.7" y="607.7" width="10.3" height="10.8" fill="#f0f0f1" stroke="#dcdde0" stroke-width="0.9"/>
<rect x="90.3" y="631.0" width="24.1" height="20.5" fill="#f0f0f1" stroke="#dcdde0" stroke-width="0.9"/>
<rect x="-14.0" y="655.8" width="22.9" height="9.5" fill="#f0f0f1" stroke="#dcdde0" stroke-width="0.9"/>
<rect x="60.9" y="604.7" width="14.4" height="18.6" fill="#f0f0f1" stroke="#dcdde0" stroke-width="0.9"/>
<rect x="99.1" y="702.2" width="13.2" height="18.2" fill="#f0f0f1" stroke="#dcdde0" stroke-width="0.9"/>
<rect x="-10.3" y="709.7" width="11.0" height="14.0" fill="#f0f0f1" stroke="#dcdde0" stroke-width="0.9"/>
<rect x="-10.7" y="792.4" width="20.8" height="21.1" fill="#f0f0f1" stroke="#dcdde0" stroke-width="0.9"/>
<rect x="14.1" y="820.9" width="23.6" height="19.7" fill="#f0f0f1" stroke="#dcdde0" stroke-width="0.9"/>
<rect x="70.0" y="827.2" width="20.1" height="17.2" fill="#f0f0f1" stroke="#dcdde0" stroke-width="0.9"/>
<rect x="91.9" y="773.4" width="19.7" height="13.9" fill="#f0f0f1" stroke="#dcdde0" stroke-width="0.9"/>
<rect x="-4.5" y="744.6" width="14.8" height="16.0" fill="#f0f0f1" stroke="#dcdde0" stroke-width="0.9"/>
<rect x="88.3" y="747.0" width="24.7" height="13.2" fill="#f0f0f1" stroke="#dcdde0" stroke-width="0.9"/>
<rect x="85.4" y="802.9" width="25.9" height="17.3" fill="#f0f0f1" stroke="#dcdde0" stroke-width="0.9"/>
<rect x="-14.1" y="899.8" width="18.8" height="20.9" fill="#f0f0f1" stroke="#dcdde0" stroke-width="0.9"/>
<rect x="-10.8" y="973.2" width="18.0" height="16.2" fill="#f0f0f1" stroke="#dcdde0" stroke-width="0.9"/>
<rect x="-10.1" y="878.0" width="16.6" height="10.6" fill="#f0f0f1" stroke="#dcdde0" stroke-width="0.9"/>
<rect x="-12.1" y="994.9" width="25.2" height="15.4" fill="#f0f0f1" stroke="#dcdde0" stroke-width="0.9"/>
<rect x="-13.0" y="1032.4" width="19.3" height="10.9" fill="#f0f0f1" stroke="#dcdde0" stroke-width="0.9"/>
<rect x="93.9" y="981.5" width="19.4" height="11.3" fill="#f0f0f1" stroke="#dcdde0" stroke-width="0.9"/>
<rect x="28.9" y="864.5" width="25.4" height="15.4" fill="#f0f0f1" stroke="#dcdde0" stroke-width="0.9"/>
<rect x="-9.5" y="931.0" width="16.4" height="18.3" fill="#f0f0f1" stroke="#dcdde0" stroke-width="0.9"/>
<rect x="102.3" y="925.6" width="13.0" height="21.6" fill="#f0f0f1" stroke="#dcdde0" stroke-width="0.9"/>
<rect x="92.3" y="898.7" width="20.4" height="21.5" fill="#f0f0f1" stroke="#dcdde0" stroke-width="0.9"/>
<rect x="84.5" y="1056.1" width="12.1" height="11.6" fill="#f0f0f1" stroke="#dcdde0" stroke-width="0.9"/>
<rect x="52.7" y="1053.7" width="17.6" height="11.7" fill="#f0f0f1" stroke="#dcdde0" stroke-width="0.9"/>
<rect x="84.5" y="865.4" width="17.0" height="21.9" fill="#f0f0f1" stroke="#dcdde0" stroke-width="0.9"/>
<rect x="-11.3" y="1050.7" width="12.0" height="15.7" fill="#f0f0f1" stroke="#dcdde0" stroke-width="0.9"/>
<rect x="6.5" y="1057.6" width="20.6" height="10.4" fill="#f0f0f1" stroke="#dcdde0" stroke-width="0.9"/>
<rect x="229.1" y="-23.6" width="21.5" height="10.1" fill="#f0f0f1" stroke="#dcdde0" stroke-width="0.9"/>
<rect x="150.7" y="7.1" width="24.5" height="19.1" fill="#f0f0f1" stroke="#dcdde0" stroke-width="0.9"/>
<rect x="202.0" y="-49.9" width="23.5" height="13.6" fill="#f0f0f1" stroke="#dcdde0" stroke-width="0.9"/>
<rect x="240.5" y="-0.4" width="10.6" height="9.5" fill="#f0f0f1" stroke="#dcdde0" stroke-width="0.9"/>
<rect x="205.8" y="8.5" width="18.8" height="17.2" fill="#f0f0f1" stroke="#dcdde0" stroke-width="0.9"/>
<rect x="228.5" y="153.0" width="14.1" height="14.7" fill="#f0f0f1" stroke="#dcdde0" stroke-width="0.9"/>
<rect x="209.2" y="50.8" width="24.0" height="16.6" fill="#f0f0f1" stroke="#dcdde0" stroke-width="0.9"/>
<rect x="138.6" y="49.7" width="13.3" height="17.8" fill="#f0f0f1" stroke="#dcdde0" stroke-width="0.9"/>
<rect x="137.3" y="101.1" width="21.2" height="19.5" fill="#f0f0f1" stroke="#dcdde0" stroke-width="0.9"/>
<rect x="237.8" y="60.5" width="14.0" height="9.8" fill="#f0f0f1" stroke="#dcdde0" stroke-width="0.9"/>
<rect x="180.5" y="155.5" width="14.5" height="11.6" fill="#f0f0f1" stroke="#dcdde0" stroke-width="0.9"/>
<rect x="142.4" y="152.1" width="19.1" height="12.8" fill="#f0f0f1" stroke="#dcdde0" stroke-width="0.9"/>
<rect x="228.7" y="116.5" width="22.5" height="13.2" fill="#f0f0f1" stroke="#dcdde0" stroke-width="0.9"/>
<rect x="240.9" y="205.3" width="11.3" height="18.7" fill="#f0f0f1" stroke="#dcdde0" stroke-width="0.9"/>
<rect x="207.3" y="285.3" width="20.2" height="20.0" fill="#f0f0f1" stroke="#dcdde0" stroke-width="0.9"/>
<rect x="233.4" y="289.4" width="14.1" height="9.8" fill="#f0f0f1" stroke="#dcdde0" stroke-width="0.9"/>
<rect x="134.9" y="201.1" width="25.1" height="15.4" fill="#f0f0f1" stroke="#dcdde0" stroke-width="0.9"/>
<rect x="184.5" y="293.3" width="13.6" height="10.8" fill="#f0f0f1" stroke="#dcdde0" stroke-width="0.9"/>
<rect x="205.8" y="191.0" width="11.2" height="9.7" fill="#f0f0f1" stroke="#dcdde0" stroke-width="0.9"/>
<rect x="227.1" y="244.5" width="23.2" height="20.8" fill="#f0f0f1" stroke="#dcdde0" stroke-width="0.9"/>
<rect x="135.4" y="245.8" width="13.8" height="14.7" fill="#f0f0f1" stroke="#dcdde0" stroke-width="0.9"/>
<rect x="238.0" y="398.1" width="11.8" height="20.2" fill="#f0f0f1" stroke="#dcdde0" stroke-width="0.9"/>
<rect x="223.7" y="332.2" width="13.6" height="15.0" fill="#f0f0f1" stroke="#dcdde0" stroke-width="0.9"/>
<rect x="137.0" y="390.4" width="20.9" height="19.4" fill="#f0f0f1" stroke="#dcdde0" stroke-width="0.9"/>
<rect x="138.0" y="434.8" width="22.4" height="10.8" fill="#f0f0f1" stroke="#dcdde0" stroke-width="0.9"/>
<rect x="210.4" y="429.7" width="24.0" height="16.3" fill="#f0f0f1" stroke="#dcdde0" stroke-width="0.9"/>
<rect x="137.3" y="331.5" width="10.7" height="16.8" fill="#f0f0f1" stroke="#dcdde0" stroke-width="0.9"/>
<rect x="173.0" y="423.8" width="19.9" height="17.4" fill="#f0f0f1" stroke="#dcdde0" stroke-width="0.9"/>
<rect x="238.8" y="429.0" width="10.7" height="11.2" fill="#f0f0f1" stroke="#dcdde0" stroke-width="0.9"/>
<rect x="135.4" y="532.3" width="15.0" height="13.4" fill="#f0f0f1" stroke="#dcdde0" stroke-width="0.9"/>
<rect x="225.4" y="527.1" width="21.6" height="10.9" fill="#f0f0f1" stroke="#dcdde0" stroke-width="0.9"/>
<rect x="221.7" y="465.2" width="18.5" height="21.4" fill="#f0f0f1" stroke="#dcdde0" stroke-width="0.9"/>
<rect x="138.6" y="500.8" width="25.0" height="17.9" fill="#f0f0f1" stroke="#dcdde0" stroke-width="0.9"/>
<rect x="172.3" y="564.2" width="24.3" height="19.5" fill="#f0f0f1" stroke="#dcdde0" stroke-width="0.9"/>
<rect x="192.4" y="465.4" width="19.2" height="17.6" fill="#f0f0f1" stroke="#dcdde0" stroke-width="0.9"/>
<rect x="139.8" y="554.2" width="14.9" height="13.6" fill="#f0f0f1" stroke="#dcdde0" stroke-width="0.9"/>
<rect x="139.4" y="486.7" width="10.3" height="9.6" fill="#f0f0f1" stroke="#dcdde0" stroke-width="0.9"/>
<rect x="203.9" y="641.6" width="21.7" height="21.5" fill="#f0f0f1" stroke="#dcdde0" stroke-width="0.9"/>
<rect x="157.1" y="603.1" width="10.1" height="12.5" fill="#f0f0f1" stroke="#dcdde0" stroke-width="0.9"/>
<rect x="152.1" y="645.2" width="15.2" height="18.7" fill="#f0f0f1" stroke="#dcdde0" stroke-width="0.9"/>
<rect x="224.5" y="614.7" width="23.8" height="19.4" fill="#f0f0f1" stroke="#dcdde0" stroke-width="0.9"/>
<rect x="176.2" y="689.4" width="17.4" height="9.2" fill="#f0f0f1" stroke="#dcdde0" stroke-width="0.9"/>
<rect x="134.1" y="692.5" width="21.4" height="19.9" fill="#f0f0f1" stroke="#dcdde0" stroke-width="0.9"/>
<rect x="157.7" y="830.6" width="15.8" height="13.5" fill="#f0f0f1" stroke="#dcdde0" stroke-width="0.9"/>
<rect x="229.2" y="788.7" width="19.9" height="19.6" fill="#f0f0f1" stroke="#dcdde0" stroke-width="0.9"/>
<rect x="135.5" y="799.1" width="15.8" height="15.9" fill="#f0f0f1" stroke="#dcdde0" stroke-width="0.9"/>
<rect x="224.5" y="743.4" width="22.4" height="13.7" fill="#f0f0f1" stroke="#dcdde0" stroke-width="0.9"/>
<rect x="227.0" y="829.7" width="20.0" height="10.6" fill="#f0f0f1" stroke="#dcdde0" stroke-width="0.9"/>
<rect x="140.7" y="742.2" width="16.2" height="11.8" fill="#f0f0f1" stroke="#dcdde0" stroke-width="0.9"/>
<rect x="232.1" y="761.4" width="15.7" height="13.2" fill="#f0f0f1" stroke="#dcdde0" stroke-width="0.9"/>
<rect x="216.2" y="868.2" width="19.1" height="11.0" fill="#f0f0f1" stroke="#dcdde0" stroke-width="0.9"/>
<rect x="237.5" y="904.3" width="14.5" height="13.3" fill="#f0f0f1" stroke="#dcdde0" stroke-width="0.9"/>
<rect x="153.7" y="1051.6" width="10.8" height="19.2" fill="#f0f0f1" stroke="#dcdde0" stroke-width="0.9"/>
<rect x="134.1" y="887.8" width="23.8" height="21.9" fill="#f0f0f1" stroke="#dcdde0" stroke-width="0.9"/>
<rect x="194.6" y="868.3" width="15.4" height="20.9" fill="#f0f0f1" stroke="#dcdde0" stroke-width="0.9"/>
<rect x="236.2" y="996.3" width="13.2" height="17.2" fill="#f0f0f1" stroke="#dcdde0" stroke-width="0.9"/>
<rect x="228.5" y="1060.7" width="21.7" height="9.6" fill="#f0f0f1" stroke="#dcdde0" stroke-width="0.9"/>
<rect x="137.2" y="968.4" width="18.4" height="9.0" fill="#f0f0f1" stroke="#dcdde0" stroke-width="0.9"/>
<rect x="139.8" y="999.4" width="23.4" height="21.4" fill="#f0f0f1" stroke="#dcdde0" stroke-width="0.9"/>
<rect x="134.4" y="943.3" width="14.4" height="11.3" fill="#f0f0f1" stroke="#dcdde0" stroke-width="0.9"/>
<rect x="230.2" y="969.6" width="18.9" height="13.7" fill="#f0f0f1" stroke="#dcdde0" stroke-width="0.9"/>
<rect x="186.9" y="1046.8" width="21.0" height="21.8" fill="#f0f0f1" stroke="#dcdde0" stroke-width="0.9"/>
<rect x="158.6" y="868.3" width="16.1" height="11.0" fill="#f0f0f1" stroke="#dcdde0" stroke-width="0.9"/>
<rect x="229.1" y="929.1" width="19.5" height="21.9" fill="#f0f0f1" stroke="#dcdde0" stroke-width="0.9"/>
<rect x="275.0" y="-15.6" width="11.0" height="21.7" fill="#f0f0f1" stroke="#dcdde0" stroke-width="0.9"/>
<rect x="353.6" y="9.6" width="18.7" height="11.9" fill="#f0f0f1" stroke="#dcdde0" stroke-width="0.9"/>
<rect x="323.1" y="9.9" width="15.6" height="16.7" fill="#f0f0f1" stroke="#dcdde0" stroke-width="0.9"/>
<rect x="362.6" y="-40.6" width="18.4" height="19.6" fill="#f0f0f1" stroke="#dcdde0" stroke-width="0.9"/>
<rect x="362.3" y="-6.3" width="23.1" height="10.6" fill="#f0f0f1" stroke="#dcdde0" stroke-width="0.9"/>
<rect x="338.2" y="153.0" width="18.4" height="12.9" fill="#f0f0f1" stroke="#dcdde0" stroke-width="0.9"/>
<rect x="306.9" y="49.6" width="17.2" height="15.2" fill="#f0f0f1" stroke="#dcdde0" stroke-width="0.9"/>
<rect x="273.0" y="106.5" width="18.3" height="12.1" fill="#f0f0f1" stroke="#dcdde0" stroke-width="0.9"/>
<rect x="297.8" y="152.1" width="10.0" height="12.4" fill="#f0f0f1" stroke="#dcdde0" stroke-width="0.9"/>
<rect x="360.7" y="49.4" width="22.7" height="17.0" fill="#f0f0f1" stroke="#dcdde0" stroke-width="0.9"/>
<rect x="370.4" y="95.9" width="13.3" height="20.2" fill="#f0f0f1" stroke="#dcdde0" stroke-width="0.9"/>
<rect x="272.3" y="55.5" width="22.3" height="19.0" fill="#f0f0f1" stroke="#dcdde0" stroke-width="0.9"/>
<rect x="321.0" y="144.8" width="11.4" height="18.8" fill="#f0f0f1" stroke="#dcdde0" stroke-width="0.9"/>
<rect x="274.5" y="278.4" width="10.9" height="18.0" fill="#f0f0f1" stroke="#dcdde0" stroke-width="0.9"/>
<rect x="324.4" y="290.7" width="12.3" height="13.3" fill="#f0f0f1" stroke="#dcdde0" stroke-width="0.9"/>
<rect x="341.6" y="293.6" width="11.4" height="14.0" fill="#f0f0f1" stroke="#dcdde0" stroke-width="0.9"/>
<rect x="367.9" y="208.3" width="14.9" height="12.2" fill="#f0f0f1" stroke="#dcdde0" stroke-width="0.9"/>
<rect x="273.8" y="225.3" width="10.8" height="16.0" fill="#f0f0f1" stroke="#dcdde0" stroke-width="0.9"/>
<rect x="301.3" y="287.3" width="11.1" height="21.4" fill="#f0f0f1" stroke="#dcdde0" stroke-width="0.9"/>
<rect x="353.9" y="186.4" width="13.3" height="11.3" fill="#f0f0f1" stroke="#dcdde0" stroke-width="0.9"/>
<rect x="367.2" y="265.3" width="17.5" height="11.6" fill="#f0f0f1" stroke="#dcdde0" stroke-width="0.9"/>
<rect x="352.9" y="333.5" width="17.1" height="14.5" fill="#f0f0f1" stroke="#dcdde0" stroke-width="0.9"/>
<rect x="302.1" y="329.9" width="14.7" height="12.0" fill="#f0f0f1" stroke="#dcdde0" stroke-width="0.9"/>
<rect x="276.7" y="368.3" width="14.1" height="16.1" fill="#f0f0f1" stroke="#dcdde0" stroke-width="0.9"/>
<rect x="272.6" y="423.3" width="24.8" height="21.9" fill="#f0f0f1" stroke="#dcdde0" stroke-width="0.9"/>
<rect x="326.3" y="424.8" width="22.5" height="20.6" fill="#f0f0f1" stroke="#dcdde0" stroke-width="0.9"/>
<rect x="272.6" y="391.0" width="18.7" height="10.1" fill="#f0f0f1" stroke="#dcdde0" stroke-width="0.9"/>
<rect x="272.5" y="339.6" width="10.8" height="13.3" fill="#f0f0f1" stroke="#dcdde0" stroke-width="0.9"/>
<rect x="272.2" y="406.1" width="15.9" height="11.6" fill="#f0f0f1" stroke="#dcdde0" stroke-width="0.9"/>
<rect x="372.1" y="528.2" width="13.7" height="18.8" fill="#f0f0f1" stroke="#dcdde0" stroke-width="0.9"/>
<rect x="337.4" y="469.6" width="18.2" height="11.2" fill="#f0f0f1" stroke="#dcdde0" stroke-width="0.9"/>
<rect x="364.4" y="565.0" width="21.3" height="9.9" fill="#f0f0f1" stroke="#dcdde0" stroke-width="0.9"/>
<rect x="360.5" y="479.4" width="21.5" height="13.5" fill="#f0f0f1" stroke="#dcdde0" stroke-width="0.9"/>
<rect x="271.9" y="620.9" width="17.6" height="14.3" fill="#f0f0f1" stroke="#dcdde0" stroke-width="0.9"/>
<rect x="360.9" y="622.5" width="23.5" height="17.1" fill="#f0f0f1" stroke="#dcdde0" stroke-width="0.9"/>
<rect x="310.1" y="606.6" width="15.1" height="20.4" fill="#f0f0f1" stroke="#dcdde0" stroke-width="0.9"/>
<rect x="313.1" y="658.1" width="21.1" height="9.2" fill="#f0f0f1" stroke="#dcdde0" stroke-width="0.9"/>
<rect x="315.9" y="703.2" width="22.0" height="20.6" fill="#f0f0f1" stroke="#dcdde0" stroke-width="0.9"/>
<rect x="272.1" y="702.8" width="10.1" height="21.2" fill="#f0f0f1" stroke="#dcdde0" stroke-width="0.9"/>
<rect x="314.0" y="745.8" width="12.8" height="16.7" fill="#f0f0f1" stroke="#dcdde0" stroke-width="0.9"/>
<rect x="332.7" y="825.3" width="25.7" height="17.4" fill="#f0f0f1" stroke="#dcdde0" stroke-width="0.9"/>
<rect x="369.7" y="817.8" width="13.2" height="19.5" fill="#f0f0f1" stroke="#dcdde0" stroke-width="0.9"/>
<rect x="300.6" y="819.2" width="19.4" height="21.6" fill="#f0f0f1" stroke="#dcdde0" stroke-width="0.9"/>
<rect x="360.2" y="775.1" width="25.1" height="11.6" fill="#f0f0f1" stroke="#dcdde0" stroke-width="0.9"/>
<rect x="272.1" y="805.4" width="21.4" height="21.1" fill="#f0f0f1" stroke="#dcdde0" stroke-width="0.9"/>
<rect x="305.5" y="1047.4" width="16.3" height="21.2" fill="#f0f0f1" stroke="#dcdde0" stroke-width="0.9"/>
<rect x="284.6" y="1046.7" width="13.0" height="20.3" fill="#f0f0f1" stroke="#dcdde0" stroke-width="0.9"/>
<rect x="274.0" y="977.5" width="15.4" height="9.9" fill="#f0f0f1" stroke="#dcdde0" stroke-width="0.9"/>
<rect x="276.1" y="892.0" width="16.5" height="16.5" fill="#f0f0f1" stroke="#dcdde0" stroke-width="0.9"/>
<rect x="353.8" y="1046.8" width="20.7" height="18.8" fill="#f0f0f1" stroke="#dcdde0" stroke-width="0.9"/>
<rect x="350.4" y="866.7" width="12.1" height="18.2" fill="#f0f0f1" stroke="#dcdde0" stroke-width="0.9"/>
<rect x="360.0" y="904.2" width="25.6" height="19.4" fill="#f0f0f1" stroke="#dcdde0" stroke-width="0.9"/>
<rect x="360.7" y="967.8" width="23.2" height="10.4" fill="#f0f0f1" stroke="#dcdde0" stroke-width="0.9"/>
<rect x="293.6" y="864.7" width="13.7" height="16.2" fill="#f0f0f1" stroke="#dcdde0" stroke-width="0.9"/>
<rect x="367.5" y="999.5" width="12.8" height="19.5" fill="#f0f0f1" stroke="#dcdde0" stroke-width="0.9"/>
<rect x="322.8" y="866.2" width="23.4" height="17.3" fill="#f0f0f1" stroke="#dcdde0" stroke-width="0.9"/>
<rect x="274.9" y="1000.7" width="14.0" height="14.1" fill="#f0f0f1" stroke="#dcdde0" stroke-width="0.9"/>
<rect x="276.9" y="955.6" width="21.9" height="9.5" fill="#f0f0f1" stroke="#dcdde0" stroke-width="0.9"/>
<rect x="471.9" y="-46.0" width="21.7" height="19.4" fill="#f0f0f1" stroke="#dcdde0" stroke-width="0.9"/>
<rect x="453.0" y="2.4" width="12.2" height="20.8" fill="#f0f0f1" stroke="#dcdde0" stroke-width="0.9"/>
<rect x="406.1" y="-40.3" width="21.3" height="12.3" fill="#f0f0f1" stroke="#dcdde0" stroke-width="0.9"/>
<rect x="434.3" y="2.0" width="12.6" height="21.3" fill="#f0f0f1" stroke="#dcdde0" stroke-width="0.9"/>
<rect x="507.7" y="-50.9" width="14.0" height="14.4" fill="#f0f0f1" stroke="#dcdde0" stroke-width="0.9"/>
<rect x="404.5" y="136.3" width="22.3" height="12.1" fill="#f0f0f1" stroke="#dcdde0" stroke-width="0.9"/>
<rect x="407.2" y="67.3" width="15.0" height="17.2" fill="#f0f0f1" stroke="#dcdde0" stroke-width="0.9"/>
<rect x="409.5" y="113.1" width="10.9" height="17.6" fill="#f0f0f1" stroke="#dcdde0" stroke-width="0.9"/>
<rect x="512.4" y="49.3" width="13.5" height="18.8" fill="#f0f0f1" stroke="#dcdde0" stroke-width="0.9"/>
<rect x="431.4" y="148.5" width="12.8" height="14.7" fill="#f0f0f1" stroke="#dcdde0" stroke-width="0.9"/>
<rect x="475.4" y="46.3" width="14.1" height="9.4" fill="#f0f0f1" stroke="#dcdde0" stroke-width="0.9"/>
<rect x="506.9" y="148.4" width="11.2" height="16.2" fill="#f0f0f1" stroke="#dcdde0" stroke-width="0.9"/>
<rect x="443.3" y="47.1" width="21.7" height="10.2" fill="#f0f0f1" stroke="#dcdde0" stroke-width="0.9"/>
<rect x="406.1" y="282.0" width="22.6" height="10.4" fill="#f0f0f1" stroke="#dcdde0" stroke-width="0.9"/>
<rect x="424.2" y="298.0" width="11.2" height="10.2" fill="#f0f0f1" stroke="#dcdde0" stroke-width="0.9"/>
<rect x="410.9" y="188.0" width="12.3" height="10.3" fill="#f0f0f1" stroke="#dcdde0" stroke-width="0.9"/>
<rect x="488.2" y="185.9" width="12.7" height="18.9" fill="#f0f0f1" stroke="#dcdde0" stroke-width="0.9"/>
<rect x="502.9" y="248.0" width="23.4" height="12.1" fill="#f0f0f1" stroke="#dcdde0" stroke-width="0.9"/>
<rect x="470.5" y="294.1" width="17.6" height="15.1" fill="#f0f0f1" stroke="#dcdde0" stroke-width="0.9"/>
<rect x="453.5" y="289.9" width="10.3" height="15.0" fill="#f0f0f1" stroke="#dcdde0" stroke-width="0.9"/>
<rect x="511.7" y="213.8" width="13.4" height="20.8" fill="#f0f0f1" stroke="#dcdde0" stroke-width="0.9"/>
<rect x="405.1" y="385.0" width="25.6" height="18.8" fill="#f0f0f1" stroke="#dcdde0" stroke-width="0.9"/>
<rect x="451.8" y="430.0" width="22.3" height="12.1" fill="#f0f0f1" stroke="#dcdde0" stroke-width="0.9"/>
<rect x="506.6" y="343.7" width="18.8" height="14.0" fill="#f0f0f1" stroke="#dcdde0" stroke-width="0.9"/>
<rect x="450.9" y="333.3" width="12.2" height="15.8" fill="#f0f0f1" stroke="#dcdde0" stroke-width="0.9"/>
<rect x="512.6" y="404.9" width="12.1" height="18.7" fill="#f0f0f1" stroke="#dcdde0" stroke-width="0.9"/>
<rect x="405.6" y="422.7" width="12.0" height="11.9" fill="#f0f0f1" stroke="#dcdde0" stroke-width="0.9"/>
<rect x="505.2" y="363.1" width="19.9" height="17.4" fill="#f0f0f1" stroke="#dcdde0" stroke-width="0.9"/>
<rect x="405.0" y="346.9" width="14.4" height="9.9" fill="#f0f0f1" stroke="#dcdde0" stroke-width="0.9"/>
<rect x="507.0" y="466.4" width="12.8" height="20.7" fill="#f0f0f1" stroke="#dcdde0" stroke-width="0.9"/>
<rect x="499.6" y="546.5" width="25.5" height="10.9" fill="#f0f0f1" stroke="#dcdde0" stroke-width="0.9"/>
<rect x="465.8" y="466.6" width="24.0" height="13.3" fill="#f0f0f1" stroke="#dcdde0" stroke-width="0.9"/>
<rect x="418.4" y="570.5" width="21.1" height="12.4" fill="#f0f0f1" stroke="#dcdde0" stroke-width="0.9"/>
<rect x="443.8" y="558.1" width="19.7" height="21.9" fill="#f0f0f1" stroke="#dcdde0" stroke-width="0.9"/>
<rect x="423.4" y="469.8" width="21.5" height="12.0" fill="#f0f0f1" stroke="#dcdde0" stroke-width="0.9"/>
<rect x="404.3" y="488.0" width="18.0" height="15.8" fill="#f0f0f1" stroke="#dcdde0" stroke-width="0.9"/>
<rect x="407.1" y="515.7" width="19.7" height="10.2" fill="#f0f0f1" stroke="#dcdde0" stroke-width="0.9"/>
<rect x="462.1" y="655.3" width="13.2" height="10.6" fill="#f0f0f1" stroke="#dcdde0" stroke-width="0.9"/>
<rect x="501.7" y="646.9" width="22.4" height="10.4" fill="#f0f0f1" stroke="#dcdde0" stroke-width="0.9"/>
<rect x="404.3" y="632.7" width="22.5" height="18.4" fill="#f0f0f1" stroke="#dcdde0" stroke-width="0.9"/>
<rect x="420.3" y="607.0" width="10.6" height="17.5" fill="#f0f0f1" stroke="#dcdde0" stroke-width="0.9"/>
<rect x="458.0" y="686.2" width="21.2" height="18.3" fill="#f0f0f1" stroke="#dcdde0" stroke-width="0.9"/>
<rect x="421.7" y="689.6" width="21.2" height="13.1" fill="#f0f0f1" stroke="#dcdde0" stroke-width="0.9"/>
<rect x="404.7" y="750.1" width="22.2" height="14.5" fill="#f0f0f1" stroke="#dcdde0" stroke-width="0.9"/>
<rect x="463.1" y="744.3" width="25.1" height="21.2" fill="#f0f0f1" stroke="#dcdde0" stroke-width="0.9"/>
<rect x="503.2" y="746.4" width="14.6" height="15.0" fill="#f0f0f1" stroke="#dcdde0" stroke-width="0.9"/>
<rect x="489.6" y="824.6" width="17.9" height="20.3" fill="#f0f0f1" stroke="#dcdde0" stroke-width="0.9"/>
<rect x="504.4" y="798.6" width="20.6" height="9.7" fill="#f0f0f1" stroke="#dcdde0" stroke-width="0.9"/>
<rect x="405.7" y="820.2" width="14.8" height="17.0" fill="#f0f0f1" stroke="#dcdde0" stroke-width="0.9"/>
<rect x="448.3" y="822.3" width="21.6" height="18.8" fill="#f0f0f1" stroke="#dcdde0" stroke-width="0.9"/>
<rect x="495.6" y="867.0" width="14.9" height="12.1" fill="#f0f0f1" stroke="#dcdde0" stroke-width="0.9"/>
<rect x="409.3" y="908.0" width="15.8" height="9.8" fill="#f0f0f1" stroke="#dcdde0" stroke-width="0.9"/>
<rect x="438.8" y="1058.3" width="11.1" height="9.9" fill="#f0f0f1" stroke="#dcdde0" stroke-width="0.9"/>
<rect x="498.8" y="1053.6" width="17.6" height="13.9" fill="#f0f0f1" stroke="#dcdde0" stroke-width="0.9"/>
<rect x="453.0" y="866.4" width="21.7" height="13.0" fill="#f0f0f1" stroke="#dcdde0" stroke-width="0.9"/>
<rect x="406.4" y="1048.0" width="20.5" height="20.2" fill="#f0f0f1" stroke="#dcdde0" stroke-width="0.9"/>
<rect x="498.6" y="893.2" width="22.7" height="16.8" fill="#f0f0f1" stroke="#dcdde0" stroke-width="0.9"/>
<rect x="406.0" y="960.3" width="20.2" height="10.0" fill="#f0f0f1" stroke="#dcdde0" stroke-width="0.9"/>
<rect x="422.5" y="866.6" width="22.0" height="9.1" fill="#f0f0f1" stroke="#dcdde0" stroke-width="0.9"/>
<rect x="466.9" y="1057.6" width="19.0" height="10.9" fill="#f0f0f1" stroke="#dcdde0" stroke-width="0.9"/>
<rect x="510.7" y="930.4" width="15.4" height="19.0" fill="#f0f0f1" stroke="#dcdde0" stroke-width="0.9"/>
<rect x="508.9" y="990.9" width="16.1" height="9.9" fill="#f0f0f1" stroke="#dcdde0" stroke-width="0.9"/>
<rect x="405.1" y="981.3" width="25.1" height="16.1" fill="#f0f0f1" stroke="#dcdde0" stroke-width="0.9"/>
<rect x="404.7" y="885.3" width="25.6" height="9.5" fill="#f0f0f1" stroke="#dcdde0" stroke-width="0.9"/>
<rect x="581.8" y="-45.3" width="21.7" height="14.3" fill="#f0f0f1" stroke="#dcdde0" stroke-width="0.9"/>
<rect x="665.9" y="-46.2" width="16.0" height="12.5" fill="#f0f0f1" stroke="#dcdde0" stroke-width="0.9"/>
<rect x="612.1" y="-49.4" width="21.0" height="13.1" fill="#f0f0f1" stroke="#dcdde0" stroke-width="0.9"/>
<rect x="555.1" y="-47.5" width="22.2" height="16.5" fill="#f0f0f1" stroke="#dcdde0" stroke-width="0.9"/>
<rect x="655.3" y="8.7" width="22.4" height="10.3" fill="#f0f0f1" stroke="#dcdde0" stroke-width="0.9"/>
<rect x="547.8" y="-9.2" width="23.6" height="20.6" fill="#f0f0f1" stroke="#dcdde0" stroke-width="0.9"/>
<rect x="545.8" y="110.5" width="15.5" height="21.1" fill="#f0f0f1" stroke="#dcdde0" stroke-width="0.9"/>
<rect x="550.4" y="72.6" width="23.4" height="12.4" fill="#f0f0f1" stroke="#dcdde0" stroke-width="0.9"/>
<rect x="616.5" y="48.7" width="24.6" height="11.9" fill="#f0f0f1" stroke="#dcdde0" stroke-width="0.9"/>
<rect x="659.0" y="115.0" width="18.5" height="20.1" fill="#f0f0f1" stroke="#dcdde0" stroke-width="0.9"/>
<rect x="655.3" y="62.8" width="21.9" height="12.0" fill="#f0f0f1" stroke="#dcdde0" stroke-width="0.9"/>
<rect x="655.0" y="153.1" width="24.2" height="13.8" fill="#f0f0f1" stroke="#dcdde0" stroke-width="0.9"/>
<rect x="545.2" y="147.0" width="16.2" height="16.1" fill="#f0f0f1" stroke="#dcdde0" stroke-width="0.9"/>
<rect x="580.4" y="49.0" width="20.1" height="16.1" fill="#f0f0f1" stroke="#dcdde0" stroke-width="0.9"/>
<rect x="550.4" y="46.5" width="19.1" height="9.1" fill="#f0f0f1" stroke="#dcdde0" stroke-width="0.9"/>
<rect x="618.0" y="293.1" width="13.2" height="11.3" fill="#f0f0f1" stroke="#dcdde0" stroke-width="0.9"/>
<rect x="552.8" y="188.0" width="21.8" height="21.4" fill="#f0f0f1" stroke="#dcdde0" stroke-width="0.9"/>
<rect x="549.5" y="229.6" width="23.3" height="21.8" fill="#f0f0f1" stroke="#dcdde0" stroke-width="0.9"/>
<rect x="656.5" y="204.2" width="23.9" height="9.3" fill="#f0f0f1" stroke="#dcdde0" stroke-width="0.9"/>
<rect x="615.4" y="186.4" width="12.4" height="10.4" fill="#f0f0f1" stroke="#dcdde0" stroke-width="0.9"/>
<rect x="545.3" y="285.9" width="16.6" height="16.1" fill="#f0f0f1" stroke="#dcdde0" stroke-width="0.9"/>
<rect x="667.9" y="230.2" width="10.1" height="20.6" fill="#f0f0f1" stroke="#dcdde0" stroke-width="0.9"/>
<rect x="546.4" y="259.8" width="13.4" height="12.4" fill="#f0f0f1" stroke="#dcdde0" stroke-width="0.9"/>
<rect x="585.1" y="298.7" width="22.6" height="10.0" fill="#f0f0f1" stroke="#dcdde0" stroke-width="0.9"/>
<rect x="665.4" y="263.3" width="12.1" height="16.1" fill="#f0f0f1" stroke="#dcdde0" stroke-width="0.9"/>
<rect x="555.6" y="432.8" width="11.8" height="13.9" fill="#f0f0f1" stroke="#dcdde0" stroke-width="0.9"/>
<rect x="664.3" y="427.0" width="14.9" height="16.7" fill="#f0f0f1" stroke="#dcdde0" stroke-width="0.9"/>
<rect x="630.6" y="422.6" width="20.3" height="21.3" fill="#f0f0f1" stroke="#dcdde0" stroke-width="0.9"/>
<rect x="608.5" y="333.9" width="12.0" height="13.6" fill="#f0f0f1" stroke="#dcdde0" stroke-width="0.9"/>
<rect x="580.1" y="432.5" width="18.3" height="12.2" fill="#f0f0f1" stroke="#dcdde0" stroke-width="0.9"/>
<rect x="547.2" y="362.3" width="16.9" height="18.6" fill="#f0f0f1" stroke="#dcdde0" stroke-width="0.9"/>
<rect x="664.9" y="338.8" width="13.7" height="13.4" fill="#f0f0f1" stroke="#dcdde0" stroke-width="0.9"/>
<rect x="664.5" y="379.0" width="13.1" height="19.0" fill="#f0f0f1" stroke="#dcdde0" stroke-width="0.9"/>
<rect x="627.5" y="330.4" width="25.9" height="21.8" fill="#f0f0f1" stroke="#dcdde0" stroke-width="0.9"/>
<rect x="545.2" y="467.2" width="11.8" height="13.2" fill="#f0f0f1" stroke="#dcdde0" stroke-width="0.9"/>
<rect x="546.2" y="489.0" width="20.8" height="16.9" fill="#f0f0f1" stroke="#dcdde0" stroke-width="0.9"/>
<rect x="545.2" y="517.8" width="19.4" height="16.5" fill="#f0f0f1" stroke="#dcdde0" stroke-width="0.9"/>
<rect x="616.1" y="569.4" width="25.8" height="12.1" fill="#f0f0f1" stroke="#dcdde0" stroke-width="0.9"/>
<rect x="660.4" y="567.5" width="18.3" height="16.2" fill="#f0f0f1" stroke="#dcdde0" stroke-width="0.9"/>
<rect x="667.5" y="523.2" width="10.9" height="13.9" fill="#f0f0f1" stroke="#dcdde0" stroke-width="0.9"/>
<rect x="565.9" y="469.2" width="24.0" height="13.0" fill="#f0f0f1" stroke="#dcdde0" stroke-width="0.9"/>
<rect x="620.3" y="468.4" width="16.2" height="20.0" fill="#f0f0f1" stroke="#dcdde0" stroke-width="0.9"/>
<rect x="657.3" y="465.4" width="23.5" height="13.4" fill="#f0f0f1" stroke="#dcdde0" stroke-width="0.9"/>
<rect x="633.5" y="605.2" width="26.0" height="11.6" fill="#f0f0f1" stroke="#dcdde0" stroke-width="0.9"/>
<rect x="549.4" y="643.1" width="17.3" height="19.8" fill="#f0f0f1" stroke="#dcdde0" stroke-width="0.9"/>
<rect x="548.3" y="606.4" width="15.1" height="14.2" fill="#f0f0f1" stroke="#dcdde0" stroke-width="0.9"/>
<rect x="576.5" y="603.2" width="20.4" height="10.4" fill="#f0f0f1" stroke="#dcdde0" stroke-width="0.9"/>
<rect x="614.2" y="648.8" width="23.3" height="18.0" fill="#f0f0f1" stroke="#dcdde0" stroke-width="0.9"/>
<rect x="565.1" y="686.1" width="12.1" height="13.8" fill="#f0f0f1" stroke="#dcdde0" stroke-width="0.9"/>
<rect x="619.4" y="706.2" width="14.7" height="12.6" fill="#f0f0f1" stroke="#dcdde0" stroke-width="0.9"/>
<rect x="655.8" y="688.0" width="25.5" height="16.2" fill="#f0f0f1" stroke="#dcdde0" stroke-width="0.9"/>
<rect x="587.6" y="828.0" width="24.8" height="16.2" fill="#f0f0f1" stroke="#dcdde0" stroke-width="0.9"/>
<rect x="560.3" y="743.3" width="22.9" height="19.8" fill="#f0f0f1" stroke="#dcdde0" stroke-width="0.9"/>
<rect x="663.4" y="789.6" width="14.9" height="9.6" fill="#f0f0f1" stroke="#dcdde0" stroke-width="0.9"/>
<rect x="598.3" y="747.6" width="12.6" height="15.5" fill="#f0f0f1" stroke="#dcdde0" stroke-width="0.9"/>
<rect x="550.7" y="770.8" width="13.0" height="21.6" fill="#f0f0f1" stroke="#dcdde0" stroke-width="0.9"/>
<rect x="549.7" y="809.5" width="19.6" height="17.1" fill="#f0f0f1" stroke="#dcdde0" stroke-width="0.9"/>
<rect x="649.1" y="746.3" width="17.4" height="13.8" fill="#f0f0f1" stroke="#dcdde0" stroke-width="0.9"/>
<rect x="651.8" y="832.3" width="19.2" height="12.2" fill="#f0f0f1" stroke="#dcdde0" stroke-width="0.9"/>
<rect x="547.9" y="956.5" width="16.9" height="9.1" fill="#f0f0f1" stroke="#dcdde0" stroke-width="0.9"/>
<rect x="627.7" y="1056.9" width="12.1" height="12.9" fill="#f0f0f1" stroke="#dcdde0" stroke-width="0.9"/>
<rect x="658.9" y="876.5" width="20.5" height="9.3" fill="#f0f0f1" stroke="#dcdde0" stroke-width="0.9"/>
<rect x="546.8" y="885.9" width="10.8" height="10.0" fill="#f0f0f1" stroke="#dcdde0" stroke-width="0.9"/>
<rect x="580.5" y="1053.0" width="19.9" height="17.3" fill="#f0f0f1" stroke="#dcdde0" stroke-width="0.9"/>
<rect x="651.7" y="956.2" width="25.5" height="14.0" fill="#f0f0f1" stroke="#dcdde0" stroke-width="0.9"/>
<rect x="621.0" y="866.3" width="21.4" height="13.9" fill="#f0f0f1" stroke="#dcdde0" stroke-width="0.9"/>
<rect x="665.1" y="891.5" width="14.2" height="21.0" fill="#f0f0f1" stroke="#dcdde0" stroke-width="0.9"/>
<rect x="594.8" y="868.4" width="18.3" height="14.5" fill="#f0f0f1" stroke="#dcdde0" stroke-width="0.9"/>
<rect x="558.0" y="864.8" width="10.5" height="14.8" fill="#f0f0f1" stroke="#dcdde0" stroke-width="0.9"/>
<rect x="546.3" y="972.9" width="17.6" height="9.2" fill="#f0f0f1" stroke="#dcdde0" stroke-width="0.9"/>
<rect x="550.8" y="925.0" width="19.7" height="9.9" fill="#f0f0f1" stroke="#dcdde0" stroke-width="0.9"/>
<rect x="655.7" y="997.0" width="23.8" height="10.3" fill="#f0f0f1" stroke="#dcdde0" stroke-width="0.9"/>
<rect x="658.1" y="1053.9" width="19.1" height="15.7" fill="#f0f0f1" stroke="#dcdde0" stroke-width="0.9"/>
<rect x="549.5" y="1019.8" width="17.4" height="19.9" fill="#f0f0f1" stroke="#dcdde0" stroke-width="0.9"/>
<rect x="549.6" y="996.1" width="22.4" height="14.8" fill="#f0f0f1" stroke="#dcdde0" stroke-width="0.9"/>
<rect x="714.6" y="-46.9" width="12.8" height="10.5" fill="#f0f0f1" stroke="#dcdde0" stroke-width="0.9"/>
<rect x="761.1" y="-45.0" width="17.9" height="13.3" fill="#f0f0f1" stroke="#dcdde0" stroke-width="0.9"/>
<rect x="701.5" y="-1.2" width="12.8" height="21.6" fill="#f0f0f1" stroke="#dcdde0" stroke-width="0.9"/>
<rect x="703.4" y="-30.0" width="13.8" height="13.0" fill="#f0f0f1" stroke="#dcdde0" stroke-width="0.9"/>
<rect x="792.6" y="3.1" width="18.4" height="10.3" fill="#f0f0f1" stroke="#dcdde0" stroke-width="0.9"/>
<rect x="705.3" y="151.3" width="19.6" height="10.5" fill="#f0f0f1" stroke="#dcdde0" stroke-width="0.9"/>
<rect x="706.5" y="81.9" width="24.1" height="17.6" fill="#f0f0f1" stroke="#dcdde0" stroke-width="0.9"/>
<rect x="752.9" y="157.0" width="17.5" height="10.3" fill="#f0f0f1" stroke="#dcdde0" stroke-width="0.9"/>
<rect x="738.9" y="48.4" width="24.9" height="16.4" fill="#f0f0f1" stroke="#dcdde0" stroke-width="0.9"/>
<rect x="773.3" y="45.1" width="18.5" height="18.2" fill="#f0f0f1" stroke="#dcdde0" stroke-width="0.9"/>
<rect x="702.6" y="121.0" width="13.9" height="20.8" fill="#f0f0f1" stroke="#dcdde0" stroke-width="0.9"/>
<rect x="794.7" y="146.7" width="18.3" height="14.0" fill="#f0f0f1" stroke="#dcdde0" stroke-width="0.9"/>
<rect x="705.9" y="45.9" width="23.4" height="10.6" fill="#f0f0f1" stroke="#dcdde0" stroke-width="0.9"/>
<rect x="787.4" y="295.0" width="24.6" height="12.4" fill="#f0f0f1" stroke="#dcdde0" stroke-width="0.9"/>
<rect x="728.8" y="297.7" width="12.1" height="11.4" fill="#f0f0f1" stroke="#dcdde0" stroke-width="0.9"/>
<rect x="706.2" y="260.9" width="14.0" height="16.1" fill="#f0f0f1" stroke="#dcdde0" stroke-width="0.9"/>
<rect x="803.6" y="195.9" width="10.3" height="20.4" fill="#f0f0f1" stroke="#dcdde0" stroke-width="0.9"/>
<rect x="705.9" y="195.5" width="14.5" height="19.0" fill="#f0f0f1" stroke="#dcdde0" stroke-width="0.9"/>
<rect x="740.3" y="188.2" width="13.9" height="17.6" fill="#f0f0f1" stroke="#dcdde0" stroke-width="0.9"/>
<rect x="798.1" y="261.0" width="13.2" height="16.6" fill="#f0f0f1" stroke="#dcdde0" stroke-width="0.9"/>
<rect x="702.7" y="233.9" width="12.0" height="14.0" fill="#f0f0f1" stroke="#dcdde0" stroke-width="0.9"/>
<rect x="791.1" y="332.8" width="17.1" height="11.4" fill="#f0f0f1" stroke="#dcdde0" stroke-width="0.9"/>
<rect x="723.2" y="329.5" width="17.2" height="16.4" fill="#f0f0f1" stroke="#dcdde0" stroke-width="0.9"/>
<rect x="777.7" y="429.6" width="21.2" height="17.3" fill="#f0f0f1" stroke="#dcdde0" stroke-width="0.9"/>
<rect x="727.6" y="431.3" width="20.6" height="13.0" fill="#f0f0f1" stroke="#dcdde0" stroke-width="0.9"/>
<rect x="793.6" y="364.9" width="20.2" height="20.3" fill="#f0f0f1" stroke="#dcdde0" stroke-width="0.9"/>
<rect x="763.6" y="330.8" width="23.3" height="11.8" fill="#f0f0f1" stroke="#dcdde0" stroke-width="0.9"/>
<rect x="756.9" y="430.9" width="14.9" height="10.5" fill="#f0f0f1" stroke="#dcdde0" stroke-width="0.9"/>
<rect x="724.2" y="566.9" width="20.1" height="12.1" fill="#f0f0f1" stroke="#dcdde0" stroke-width="0.9"/>
<rect x="706.9" y="534.2" width="15.0" height="15.4" fill="#f0f0f1" stroke="#dcdde0" stroke-width="0.9"/>
<rect x="789.7" y="551.0" width="23.0" height="9.7" fill="#f0f0f1" stroke="#dcdde0" stroke-width="0.9"/>
<rect x="767.1" y="465.3" width="17.1" height="16.0" fill="#f0f0f1" stroke="#dcdde0" stroke-width="0.9"/>
<rect x="764.4" y="563.7" width="16.1" height="20.9" fill="#f0f0f1" stroke="#dcdde0" stroke-width="0.9"/>
<rect x="796.0" y="506.0" width="13.6" height="9.6" fill="#f0f0f1" stroke="#dcdde0" stroke-width="0.9"/>
<rect x="799.2" y="566.3" width="12.1" height="18.3" fill="#f0f0f1" stroke="#dcdde0" stroke-width="0.9"/>
<rect x="758.1" y="603.6" width="20.8" height="15.9" fill="#f0f0f1" stroke="#dcdde0" stroke-width="0.9"/>
<rect x="730.5" y="655.1" width="15.1" height="9.1" fill="#f0f0f1" stroke="#dcdde0" stroke-width="0.9"/>
<rect x="798.2" y="629.8" width="13.7" height="18.2" fill="#f0f0f1" stroke="#dcdde0" stroke-width="0.9"/>
<rect x="706.9" y="628.4" width="23.0" height="21.8" fill="#f0f0f1" stroke="#dcdde0" stroke-width="0.9"/>
<rect x="746.0" y="689.0" width="21.1" height="17.2" fill="#f0f0f1" stroke="#dcdde0" stroke-width="0.9"/>
<rect x="803.4" y="691.5" width="10.6" height="19.0" fill="#f0f0f1" stroke="#dcdde0" stroke-width="0.9"/>
<rect x="727.2" y="746.8" width="21.0" height="10.8" fill="#f0f0f1" stroke="#dcdde0" stroke-width="0.9"/>
<rect x="792.1" y="818.5" width="19.4" height="21.5" fill="#f0f0f1" stroke="#dcdde0" stroke-width="0.9"/>
<rect x="729.0" y="823.8" width="13.7" height="19.1" fill="#f0f0f1" stroke="#dcdde0" stroke-width="0.9"/>
<rect x="792.0" y="751.8" width="18.2" height="21.4" fill="#f0f0f1" stroke="#dcdde0" stroke-width="0.9"/>
<rect x="702.5" y="801.6" width="14.1" height="18.0" fill="#f0f0f1" stroke="#dcdde0" stroke-width="0.9"/>
<rect x="704.5" y="825.1" width="12.4" height="13.9" fill="#f0f0f1" stroke="#dcdde0" stroke-width="0.9"/>
<rect x="720.5" y="1051.0" width="15.4" height="14.2" fill="#f0f0f1" stroke="#dcdde0" stroke-width="0.9"/>
<rect x="706.1" y="975.2" width="18.7" height="21.2" fill="#f0f0f1" stroke="#dcdde0" stroke-width="0.9"/>
<rect x="798.1" y="930.5" width="11.6" height="21.5" fill="#f0f0f1" stroke="#dcdde0" stroke-width="0.9"/>
<rect x="749.0" y="1056.9" width="11.3" height="10.4" fill="#f0f0f1" stroke="#dcdde0" stroke-width="0.9"/>
<rect x="719.4" y="863.2" width="23.0" height="12.9" fill="#f0f0f1" stroke="#dcdde0" stroke-width="0.9"/>
<rect x="701.2" y="1001.3" width="10.5" height="21.0" fill="#f0f0f1" stroke="#dcdde0" stroke-width="0.9"/>
<rect x="749.5" y="867.0" width="13.4" height="10.9" fill="#f0f0f1" stroke="#dcdde0" stroke-width="0.9"/>
<rect x="799.1" y="866.4" width="13.8" height="15.0" fill="#f0f0f1" stroke="#dcdde0" stroke-width="0.9"/>
<rect x="799.8" y="899.0" width="13.4" height="9.2" fill="#f0f0f1" stroke="#dcdde0" stroke-width="0.9"/>
<rect x="778.0" y="866.9" width="11.5" height="15.2" fill="#f0f0f1" stroke="#dcdde0" stroke-width="0.9"/>
<rect x="704.1" y="1037.3" width="11.9" height="18.7" fill="#f0f0f1" stroke="#dcdde0" stroke-width="0.9"/>
<rect x="701.4" y="949.5" width="14.6" height="15.0" fill="#f0f0f1" stroke="#dcdde0" stroke-width="0.9"/>
<rect x="784.3" y="1034.9" width="23.8" height="20.2" fill="#f0f0f1" stroke="#dcdde0" stroke-width="0.9"/>
<rect x="862.8" y="-1.0" width="25.5" height="14.5" fill="#f0f0f1" stroke="#dcdde0" stroke-width="0.9"/>
<rect x="866.0" y="-36.3" width="25.0" height="18.9" fill="#f0f0f1" stroke="#dcdde0" stroke-width="0.9"/>
<rect x="864.1" y="54.4" width="24.9" height="18.5" fill="#f0f0f1" stroke="#dcdde0" stroke-width="0.9"/>
<rect x="867.5" y="139.6" width="19.7" height="10.4" fill="#f0f0f1" stroke="#dcdde0" stroke-width="0.9"/>
<rect x="837.2" y="143.6" width="17.2" height="13.2" fill="#f0f0f1" stroke="#dcdde0" stroke-width="0.9"/>
<rect x="872.7" y="101.5" width="16.1" height="12.5" fill="#f0f0f1" stroke="#dcdde0" stroke-width="0.9"/>
<rect x="832.1" y="294.6" width="19.6" height="10.8" fill="#f0f0f1" stroke="#dcdde0" stroke-width="0.9"/>
<rect x="868.4" y="246.0" width="21.4" height="14.6" fill="#f0f0f1" stroke="#dcdde0" stroke-width="0.9"/>
<rect x="833.7" y="263.9" width="15.2" height="12.2" fill="#f0f0f1" stroke="#dcdde0" stroke-width="0.9"/>
<rect x="865.9" y="278.2" width="24.2" height="17.5" fill="#f0f0f1" stroke="#dcdde0" stroke-width="0.9"/>
<rect x="853.7" y="426.9" width="11.3" height="17.2" fill="#f0f0f1" stroke="#dcdde0" stroke-width="0.9"/>
<rect x="865.3" y="347.0" width="20.5" height="13.4" fill="#f0f0f1" stroke="#dcdde0" stroke-width="0.9"/>
<rect x="832.6" y="329.0" width="25.2" height="14.5" fill="#f0f0f1" stroke="#dcdde0" stroke-width="0.9"/>
<rect x="875.2" y="369.5" width="14.7" height="11.3" fill="#f0f0f1" stroke="#dcdde0" stroke-width="0.9"/>
<rect x="871.7" y="527.9" width="18.8" height="16.2" fill="#f0f0f1" stroke="#dcdde0" stroke-width="0.9"/>
<rect x="836.5" y="522.5" width="17.3" height="18.7" fill="#f0f0f1" stroke="#dcdde0" stroke-width="0.9"/>
<rect x="837.2" y="476.0" width="19.8" height="11.0" fill="#f0f0f1" stroke="#dcdde0" stroke-width="0.9"/>
<rect x="835.1" y="502.6" width="23.0" height="13.4" fill="#f0f0f1" stroke="#dcdde0" stroke-width="0.9"/>
<rect x="849.0" y="650.4" width="21.1" height="14.2" fill="#f0f0f1" stroke="#dcdde0" stroke-width="0.9"/>
<rect x="836.8" y="606.2" width="23.0" height="15.9" fill="#f0f0f1" stroke="#dcdde0" stroke-width="0.9"/>
<rect x="873.9" y="688.7" width="14.0" height="17.8" fill="#f0f0f1" stroke="#dcdde0" stroke-width="0.9"/>
<rect x="836.7" y="756.7" width="10.8" height="9.1" fill="#f0f0f1" stroke="#dcdde0" stroke-width="0.9"/>
<rect x="832.2" y="821.4" width="18.4" height="20.7" fill="#f0f0f1" stroke="#dcdde0" stroke-width="0.9"/>
<rect x="835.4" y="775.1" width="23.4" height="12.0" fill="#f0f0f1" stroke="#dcdde0" stroke-width="0.9"/>
<rect x="862.1" y="1045.5" width="24.1" height="17.9" fill="#f0f0f1" stroke="#dcdde0" stroke-width="0.9"/>
<rect x="832.4" y="865.9" width="10.1" height="20.7" fill="#f0f0f1" stroke="#dcdde0" stroke-width="0.9"/>
<rect x="873.2" y="871.5" width="17.6" height="19.8" fill="#f0f0f1" stroke="#dcdde0" stroke-width="0.9"/>
<rect x="864.9" y="995.6" width="23.6" height="21.8" fill="#f0f0f1" stroke="#dcdde0" stroke-width="0.9"/>
<rect x="833.6" y="926.3" width="23.1" height="15.3" fill="#f0f0f1" stroke="#dcdde0" stroke-width="0.9"/>
<rect x="866.0" y="924.8" width="19.3" height="20.9" fill="#f0f0f1" stroke="#dcdde0" stroke-width="0.9"/>
<rect x="836.7" y="950.0" width="21.5" height="19.6" fill="#f0f0f1" stroke="#dcdde0" stroke-width="0.9"/>
<line x1="-157" y1="-80" x2="-157" y2="1100" stroke="#e1e2e4" stroke-width="12"/>
<line x1="-23.7" y1="-80" x2="-23.7" y2="1100" stroke="#e1e2e4" stroke-width="12"/>
<line x1="125" y1="-80" x2="125" y2="1100" stroke="#e1e2e4" stroke-width="15"/>
<line x1="262" y1="-80" x2="262" y2="1100" stroke="#e1e2e4" stroke-width="12"/>
<line x1="395" y1="-80" x2="395" y2="1100" stroke="#e1e2e4" stroke-width="12"/>
<line x1="536" y1="-80" x2="536" y2="1100" stroke="#e1e2e4" stroke-width="14"/>
<line x1="692" y1="-80" x2="692" y2="1100" stroke="#e1e2e4" stroke-width="12"/>
<line x1="823" y1="-80" x2="823" y2="1100" stroke="#e1e2e4" stroke-width="12"/>
<line x1="-260" y1="36" x2="950" y2="36" stroke="#e1e2e4" stroke-width="12"/>
<line x1="-260" y1="176.7" x2="950" y2="176.7" stroke="#e1e2e4" stroke-width="12"/>
<line x1="-260" y1="319" x2="950" y2="319" stroke="#e1e2e4" stroke-width="12"/>
<line x1="-260" y1="594" x2="950" y2="594" stroke="#e1e2e4" stroke-width="13"/>
<line x1="-260" y1="677" x2="950" y2="677" stroke="#e1e2e4" stroke-width="12"/>
<line x1="-260" y1="733" x2="950" y2="733" stroke="#e1e2e4" stroke-width="13"/>
<line x1="-260" y1="854" x2="950" y2="854" stroke="#e1e2e4" stroke-width="12"/>
<line x1="-157" y1="-80" x2="-157" y2="1100" stroke="#ffffff" stroke-width="10"/>
<line x1="-23.7" y1="-80" x2="-23.7" y2="1100" stroke="#ffffff" stroke-width="10"/>
<line x1="125" y1="-80" x2="125" y2="1100" stroke="#ffffff" stroke-width="13"/>
<line x1="262" y1="-80" x2="262" y2="1100" stroke="#ffffff" stroke-width="10"/>
<line x1="395" y1="-80" x2="395" y2="1100" stroke="#ffffff" stroke-width="10"/>
<line x1="536" y1="-80" x2="536" y2="1100" stroke="#ffffff" stroke-width="12"/>
<line x1="692" y1="-80" x2="692" y2="1100" stroke="#ffffff" stroke-width="10"/>
<line x1="823" y1="-80" x2="823" y2="1100" stroke="#ffffff" stroke-width="10"/>
<line x1="-260" y1="36" x2="950" y2="36" stroke="#ffffff" stroke-width="10"/>
<line x1="-260" y1="176.7" x2="950" y2="176.7" stroke="#ffffff" stroke-width="10"/>
<line x1="-260" y1="319" x2="950" y2="319" stroke="#ffffff" stroke-width="10"/>
<line x1="-260" y1="594" x2="950" y2="594" stroke="#ffffff" stroke-width="11"/>
<line x1="-260" y1="677" x2="950" y2="677" stroke="#ffffff" stroke-width="10"/>
<line x1="-260" y1="733" x2="950" y2="733" stroke="#ffffff" stroke-width="11"/>
<line x1="-260" y1="854" x2="950" y2="854" stroke="#ffffff" stroke-width="10"/>
<line x1="-260" y1="456" x2="950" y2="456" stroke="#f6cf65" stroke-width="16"/>
<line x1="-260" y1="456" x2="950" y2="456" stroke="#fde293" stroke-width="13.5"/>
</g>
<defs><filter id="shd" x="-20%" y="-20%" width="140%" height="140%"><feDropShadow dx="0" dy="1" stdDeviation="1" flood-color="#000" flood-opacity="0.25"/></filter></defs>
<polygon points="684.0,106.0 709.0,84.0 734.0,111.0 709.0,133.0" fill="#fdf4ec" stroke="#fae3cf" stroke-width="0.8"/>
<polygon points="754.0,131.0 769.0,118.0 809.0,161.0 794.0,174.0" fill="#fdf4ec" stroke="#fae3cf" stroke-width="0.8"/>
<polygon points="828.0,89.0 864.0,66.0 896.0,93.0 864.0,117.0" fill="#fdf4ec" stroke="#fae3cf" stroke-width="0.8"/>
<polygon points="624.0,283.0 649.0,261.0 679.0,291.0 669.0,301.0 639.0,301.0" fill="#fdf4ec" stroke="#fae3cf" stroke-width="0.8"/>
<polygon points="1089.0,126.0 1102.0,116.0 1114.0,128.0 1101.0,139.0" fill="#fdf4ec" stroke="#fae3cf" stroke-width="0.8"/>
<polygon points="819.0,293.0 839.0,275.0 856.0,291.0 846.0,301.0 829.0,301.0" fill="#fdf4ec" stroke="#fae3cf" stroke-width="0.8"/>
<polygon points="329.0,263.0 346.0,248.0 360.0,261.0 343.0,276.0" fill="#fdf4ec" stroke="#fae3cf" stroke-width="0.8"/>
<polygon points="560.6,210 587.2,186 619,207.29999999999995 590,233.89999999999998" fill="#d5e6d6" stroke="#c9dccb" stroke-width="0.8"/>
<polyline points="556.6,220.60000000000002 588.5,244.5 623,216.60000000000002 639,216.60000000000002" fill="none" stroke="#e6f3e7" stroke-width="3"/>
<text x="4.0" y="9.5" font-size="14.5" fill="#5f7585" stroke="#fff" stroke-width="3" stroke-linejoin="round" paint-order="stroke" textLength="139.5" lengthAdjust="spacingAndGlyphs" font-weight="normal" text-anchor="start">Marys Catholic Church</text>
<text x="49.0" y="117.0" font-size="14.5" fill="#5f7585" stroke="#fff" stroke-width="3" stroke-linejoin="round" paint-order="stroke" textLength="49.0" lengthAdjust="spacingAndGlyphs" font-weight="normal" text-anchor="end">omy Air</text>
<text x="49.0" y="131.0" font-size="14.5" fill="#5f7585" stroke="#fff" stroke-width="3" stroke-linejoin="round" paint-order="stroke" textLength="49.0" lengthAdjust="spacingAndGlyphs" font-weight="normal" text-anchor="end">ng &amp; AC</text>
<text x="271.0" y="77.0" font-size="14.5" fill="#1a73e8" stroke="#fff" stroke-width="3" stroke-linejoin="round" paint-order="stroke" textLength="102.4" lengthAdjust="spacingAndGlyphs" font-weight="normal" text-anchor="start">Tuhkimo Shawls</text>
<text x="381.2" y="59.0" font-size="14.5" fill="#5f7585" stroke="#fff" stroke-width="3" stroke-linejoin="round" paint-order="stroke" textLength="152.8" lengthAdjust="spacingAndGlyphs" font-weight="normal" text-anchor="start">Trinity Methodist Church</text>
<text x="619.0" y="46.5" font-size="14.5" fill="#5a64c6" stroke="#fff" stroke-width="3" stroke-linejoin="round" paint-order="stroke" textLength="107.7" lengthAdjust="spacingAndGlyphs" font-weight="normal" text-anchor="start">CenterState Bank</text>
<text x="500.3" y="118.3" font-size="14.5" fill="#5f7585" stroke="#fff" stroke-width="3" stroke-linejoin="round" paint-order="stroke" textLength="117.4" lengthAdjust="spacingAndGlyphs" font-weight="normal" text-anchor="start">Hand &amp; Associates</text>
<text x="736.0" y="91.7" font-size="14.5" fill="#d9780f" stroke="#fff" stroke-width="3" stroke-linejoin="round" paint-order="stroke" textLength="85.0" lengthAdjust="spacingAndGlyphs" font-weight="normal" text-anchor="end">Resting Pulse</text>
<text x="736.0" y="105.2" font-size="14.5" fill="#d9780f" stroke="#fff" stroke-width="3" stroke-linejoin="round" paint-order="stroke" textLength="113.0" lengthAdjust="spacingAndGlyphs" font-weight="normal" text-anchor="end">Brewing Company</text>
<text x="439.7" y="134.2" font-size="14.5" fill="#5f7585" stroke="#fff" stroke-width="3" stroke-linejoin="round" paint-order="stroke" textLength="107.7" lengthAdjust="spacingAndGlyphs" font-weight="normal" text-anchor="end">First Presbyterian</text>
<text x="439.7" y="148.3" font-size="14.5" fill="#5f7585" stroke="#fff" stroke-width="3" stroke-linejoin="round" paint-order="stroke" textLength="117.5" lengthAdjust="spacingAndGlyphs" font-weight="normal" text-anchor="end">Church (FPO) - EPC</text>
<text x="225.4" y="194.6" font-size="14.5" fill="#5f7585" stroke="#fff" stroke-width="3" stroke-linejoin="round" paint-order="stroke" textLength="96.6" lengthAdjust="spacingAndGlyphs" font-weight="normal" text-anchor="start">Dudley Land Co</text>
<text x="617.7" y="169.6" font-size="14.5" fill="#1e8e3e" stroke="#fff" stroke-width="3" stroke-linejoin="round" paint-order="stroke" textLength="66.4" lengthAdjust="spacingAndGlyphs" font-weight="normal" text-anchor="end">CyberZone</text>
<text x="617.7" y="182.9" font-size="14.5" fill="#1e8e3e" stroke="#fff" stroke-width="3" stroke-linejoin="round" paint-order="stroke" textLength="131.5" lengthAdjust="spacingAndGlyphs" font-weight="normal" text-anchor="end">Entertainment Center</text>
<text x="353.5" y="226.7" font-size="14.5" fill="#d9780f" stroke="#fff" stroke-width="3" stroke-linejoin="round" paint-order="stroke" textLength="51.5" lengthAdjust="spacingAndGlyphs" font-weight="normal" text-anchor="end">Wendy's</text>
<text x="353.5" y="238.4" font-size="11" fill="#d9780f" stroke="#fff" stroke-width="3" stroke-linejoin="round" paint-order="stroke" textLength="86.5" lengthAdjust="spacingAndGlyphs" font-weight="normal" text-anchor="end">Takeout • Delivery</text>
<text x="287.0" y="290.5" font-size="14.5" fill="#5f7585" stroke="#fff" stroke-width="3" stroke-linejoin="round" paint-order="stroke" textLength="95.7" lengthAdjust="spacingAndGlyphs" font-weight="normal" text-anchor="start">Elements Salon</text>
<text x="623.0" y="256.0" font-size="14.5" fill="#d9780f" stroke="#fff" stroke-width="3" stroke-linejoin="round" paint-order="stroke" textLength="65.2" lengthAdjust="spacingAndGlyphs" font-weight="normal" text-anchor="start">La Cantina</text>
<text x="623.0" y="268.0" font-size="11" fill="#d9780f" stroke="#fff" stroke-width="3" stroke-linejoin="round" paint-order="stroke" textLength="86.5" lengthAdjust="spacingAndGlyphs" font-weight="normal" text-anchor="start">Takeout • Delivery</text>
<text x="899.7" y="39.5" font-size="14.5" fill="#12979f" stroke="#fff" stroke-width="3" stroke-linejoin="round" paint-order="stroke" textLength="83.2" lengthAdjust="spacingAndGlyphs" font-weight="normal" text-anchor="end">Bottling Plant</text>
<text x="898.5" y="53.0" font-size="14.5" fill="#12979f" stroke="#fff" stroke-width="3" stroke-linejoin="round" paint-order="stroke" textLength="78.5" lengthAdjust="spacingAndGlyphs" font-weight="normal" text-anchor="end">Event Center</text>
<text x="1016.3" y="92.5" font-size="14.5" fill="#5f7585" stroke="#fff" stroke-width="3" stroke-linejoin="round" paint-order="stroke" textLength="107.0" lengthAdjust="spacingAndGlyphs" font-weight="normal" text-anchor="start">Whatley Eye Care</text>
<text x="842.7" y="157.8" font-size="14.5" fill="#d9780f" stroke="#fff" stroke-width="3" stroke-linejoin="round" paint-order="stroke" textLength="107.9" lengthAdjust="spacingAndGlyphs" font-weight="normal" text-anchor="end">Red Clay Brewing</text>
<text x="842.7" y="171.4" font-size="14.5" fill="#d9780f" stroke="#fff" stroke-width="3" stroke-linejoin="round" paint-order="stroke" textLength="58.7" lengthAdjust="spacingAndGlyphs" font-weight="normal" text-anchor="end">Company</text>
<text x="821.0" y="257.4" font-size="14.5" fill="#d9780f" stroke="#fff" stroke-width="3" stroke-linejoin="round" paint-order="stroke" textLength="98.8" lengthAdjust="spacingAndGlyphs" font-weight="normal" text-anchor="start">Zazu Gastropub</text>
<text x="821.0" y="267.7" font-size="11" fill="#d9780f" stroke="#fff" stroke-width="3" stroke-linejoin="round" paint-order="stroke" textLength="38.6" lengthAdjust="spacingAndGlyphs" font-weight="normal" text-anchor="start">Takeout</text>
<text x="1135.6" y="239.0" font-size="14.5" fill="#5a64c6" stroke="#fff" stroke-width="3" stroke-linejoin="round" paint-order="stroke" textLength="83.2" lengthAdjust="spacingAndGlyphs" font-weight="normal" text-anchor="end">AuburnBank -</text>
<text x="1138.7" y="252.8" font-size="14.5" fill="#5a64c6" stroke="#fff" stroke-width="3" stroke-linejoin="round" paint-order="stroke" textLength="121.7" lengthAdjust="spacingAndGlyphs" font-weight="normal" text-anchor="end">Opelika Main Office</text>
<text x="1180.0" y="177.0" font-size="14.5" fill="#5f7585" stroke="#fff" stroke-width="3" stroke-linejoin="round" paint-order="stroke" font-weight="normal" text-anchor="start">L</text>
<text x="1180.0" y="190.0" font-size="14.5" fill="#5f7585" stroke="#fff" stroke-width="3" stroke-linejoin="round" paint-order="stroke" font-weight="normal" text-anchor="start">M</text>
<text x="699.0" y="308.0" font-size="14.5" fill="#d9780f" stroke="#fff" stroke-width="3" stroke-linejoin="round" paint-order="stroke" font-weight="normal" text-anchor="start">Firkin &amp; Barrel</text>
<text transform="translate(209.3,56.4) rotate(47.8)" x="0" y="4" font-size="12.5" fill="#6b6b6b" stroke="#fff" stroke-width="2.5" stroke-linejoin="round" paint-order="stroke" text-anchor="middle">N 10th St</text>
<text transform="translate(230.0,28.5) rotate(-42.2)" x="0" y="4" font-size="11.5" fill="#6b6b6b" stroke="#fff" stroke-width="2.5" stroke-linejoin="round" paint-order="stroke" text-anchor="middle">4th Ave</text>
<text transform="translate(66.0,104.4) rotate(47.8)" x="0" y="4" font-size="11.5" fill="#6b6b6b" stroke="#fff" stroke-width="2.5" stroke-linejoin="round" paint-order="stroke" text-anchor="middle">11th St</text>
<text transform="translate(24.0,220.5) rotate(-42.2)" x="0" y="4" font-size="11.5" fill="#6b6b6b" stroke="#fff" stroke-width="2.5" stroke-linejoin="round" paint-order="stroke" text-anchor="middle">4th Ave</text>
<text transform="translate(6.0,244.5) rotate(47.8)" x="0" y="4" font-size="11.5" fill="#6b6b6b" stroke="#fff" stroke-width="2.5" stroke-linejoin="round" paint-order="stroke" text-anchor="middle">6th St</text>
<text transform="translate(732.5,13.0) rotate(47.8)" x="0" y="4" font-size="11.5" fill="#6b6b6b" stroke="#fff" stroke-width="2.5" stroke-linejoin="round" paint-order="stroke" text-anchor="middle">N 7th St</text>
<text transform="translate(663.0,143.4) rotate(47.8)" x="0" y="4" font-size="11.5" fill="#6b6b6b" stroke="#fff" stroke-width="2.5" stroke-linejoin="round" paint-order="stroke" text-anchor="middle">N 8th St</text>
<text transform="translate(532.7,206.6) rotate(47.8)" x="0" y="4" font-size="11.5" fill="#6b6b6b" stroke="#fff" stroke-width="2.5" stroke-linejoin="round" paint-order="stroke" text-anchor="middle">N 9th St</text>
<text transform="translate(990.6,65.5) rotate(47.8)" x="0" y="4" font-size="11.5" fill="#6b6b6b" stroke="#fff" stroke-width="2.5" stroke-linejoin="round" paint-order="stroke" text-anchor="middle">N 6th St</text>
<text transform="translate(747.8,124.1) rotate(-42.2)" x="0" y="4" font-size="11.5" fill="#6b6b6b" stroke="#fff" stroke-width="2.5" stroke-linejoin="round" paint-order="stroke" text-anchor="middle">1st Ave</text>
<text transform="translate(853.4,214.3) rotate(-42.2)" x="0" y="4" font-size="11.5" fill="#6b6b6b" stroke="#fff" stroke-width="2.5" stroke-linejoin="round" paint-order="stroke" text-anchor="middle">S Railroad Ave</text>
<text transform="translate(910.5,208.8) rotate(47.8)" x="0" y="4" font-size="11.5" fill="#6b6b6b" stroke="#fff" stroke-width="2.5" stroke-linejoin="round" paint-order="stroke" text-anchor="middle">S 7th St</text>
<text transform="translate(1065.4,186.5) rotate(-42.2)" x="0" y="4" font-size="11.5" fill="#6b6b6b" stroke="#fff" stroke-width="2.5" stroke-linejoin="round" paint-order="stroke" text-anchor="middle">Ave A</text>
<text transform="translate(1110.9,192.7) rotate(47.8)" x="0" y="4" font-size="11.5" fill="#6b6b6b" stroke="#fff" stroke-width="2.5" stroke-linejoin="round" paint-order="stroke" text-anchor="middle">S 6th St</text>
<text transform="translate(764.8,252.8) rotate(47.8)" x="0" y="4" font-size="11.5" fill="#6b6b6b" stroke="#fff" stroke-width="2.5" stroke-linejoin="round" paint-order="stroke" text-anchor="middle">N 8th St</text>
<g transform="translate(147.0,-10.0) scale(1.000,0.986)"><path d="M10 0C4.5 0 0 4.3 0 9.8C0 16.8 10 29 10 29S20 16.8 20 9.8C20 4.3 15.5 0 10 0Z" fill="#78909c"/><path d="M10 3.5v13M6 7.5h8" stroke="#fff" stroke-width="2.4"/></g>
<g transform="translate(16.6,72.0) scale(1.000,1.000)"><path d="M10 0C4.5 0 0 4.3 0 9.8C0 16.8 10 29 10 29S20 16.8 20 9.8C20 4.3 15.5 0 10 0Z" fill="#78909c"/><circle cx="10" cy="9.5" r="3.6" fill="#fff"/></g>
<g transform="translate(284.4,81.0) scale(0.995,0.966)"><path d="M10 0C4.5 0 0 4.3 0 9.8C0 16.8 10 29 10 29S20 16.8 20 9.8C20 4.3 15.5 0 10 0Z" fill="#4285f4"/><rect x="5" y="7" width="10" height="8" rx="1" fill="#fff"/><path d="M7.5 7V5.5a2.5 2.5 0 0 1 5 0V7" stroke="#fff" stroke-width="1.5" fill="none"/><path d="M7.5 10.5q2.5 2.5 5 0" stroke="#4285f4" stroke-width="1.3" fill="none"/></g>
<g transform="translate(443.7,121.0) scale(0.930,0.966)"><path d="M10 0C4.5 0 0 4.3 0 9.8C0 16.8 10 29 10 29S20 16.8 20 9.8C20 4.3 15.5 0 10 0Z" fill="#78909c"/><path d="M10 3.5v13M6 7.5h8" stroke="#fff" stroke-width="2.4"/></g>
<g transform="translate(289.7,150.0) scale(0.995,0.966)"><path d="M10 0C4.5 0 0 4.3 0 9.8C0 16.8 10 29 10 29S20 16.8 20 9.8C20 4.3 15.5 0 10 0Z" fill="#78909c"/><circle cx="10" cy="9.5" r="3.6" fill="#fff"/></g>
<g transform="translate(320.3,242.0) scale(0.995,1.000)"><path d="M10 0C4.5 0 0 4.3 0 9.8C0 16.8 10 29 10 29S20 16.8 20 9.8C20 4.3 15.5 0 10 0Z" fill="#f29900"/><path d="M6.5 4v5.5c0 1.2 .8 2 1.8 2V17M6.5 4v4M8.3 4v4M10 4v5.5c0 1.2-.8 2-1.7 2M13.5 4c-1.5 .5-2 2.5-2 5h2v8" stroke="#fff" stroke-width="1.6" fill="none"/></g>
<g transform="translate(386.5,270.0) scale(0.925,1.000)"><path d="M10 0C4.5 0 0 4.3 0 9.8C0 16.8 10 29 10 29S20 16.8 20 9.8C20 4.3 15.5 0 10 0Z" fill="#78909c"/><circle cx="10" cy="9.5" r="3.6" fill="#fff"/></g>
<g transform="translate(536.7,38.5) scale(0.995,1.010)"><path d="M10 0C4.5 0 0 4.3 0 9.8C0 16.8 10 29 10 29S20 16.8 20 9.8C20 4.3 15.5 0 10 0Z" fill="#78909c"/><path d="M10 3.5v13M6 7.5h8" stroke="#fff" stroke-width="2.4"/></g>
<g transform="translate(693.5,2.0) scale(0.995,0.986)"><path d="M10 0C4.5 0 0 4.3 0 9.8C0 16.8 10 29 10 29S20 16.8 20 9.8C20 4.3 15.5 0 10 0Z" fill="#7986cb"/><text x="10" y="15" font-size="15" font-weight="bold" fill="#fff" text-anchor="middle">$</text></g>
<g transform="translate(584.5,74.4) scale(1.065,0.962)"><path d="M10 0C4.5 0 0 4.3 0 9.8C0 16.8 10 29 10 29S20 16.8 20 9.8C20 4.3 15.5 0 10 0Z" fill="#78909c"/><circle cx="10" cy="9.5" r="3.6" fill="#fff"/></g>
<g transform="translate(701.5,109.0) scale(1.060,1.007)"><path d="M10 0C4.5 0 0 4.3 0 9.8C0 16.8 10 29 10 29S20 16.8 20 9.8C20 4.3 15.5 0 10 0Z" fill="#f29900"/><circle cx="10" cy="9.5" r="3.6" fill="#fff"/></g>
<g transform="translate(584.5,187.4) scale(1.065,0.962)"><path d="M10 0C4.5 0 0 4.3 0 9.8C0 16.8 10 29 10 29S20 16.8 20 9.8C20 4.3 15.5 0 10 0Z" fill="#34a853"/><circle cx="10" cy="9.5" r="3.6" fill="#fff"/></g>
<g transform="translate(636.4,271.0) scale(0.995,0.966)"><path d="M10 0C4.5 0 0 4.3 0 9.8C0 16.8 10 29 10 29S20 16.8 20 9.8C20 4.3 15.5 0 10 0Z" fill="#f29900"/><path d="M6.5 4v5.5c0 1.2 .8 2 1.8 2V17M6.5 4v4M8.3 4v4M10 4v5.5c0 1.2-.8 2-1.7 2M13.5 4c-1.5 .5-2 2.5-2 5h2v8" stroke="#fff" stroke-width="1.6" fill="none"/></g>
<g transform="translate(865.8,57.0) scale(1.080,1.010)"><path d="M10 0C4.5 0 0 4.3 0 9.8C0 16.8 10 29 10 29S20 16.8 20 9.8C20 4.3 15.5 0 10 0Z" fill="#12b5cb"/><path d="M5 16V8h2v2h2V8h2v2h2V8h2v8z" fill="#fff"/><path d="M10.5 8V3.5l3 1-3 1" stroke="#fff" stroke-width="1" fill="#fff"/></g>
<g transform="translate(1090.9,95.6) scale(1.080,1.010)"><path d="M10 0C4.5 0 0 4.3 0 9.8C0 16.8 10 29 10 29S20 16.8 20 9.8C20 4.3 15.5 0 10 0Z" fill="#78909c"/><circle cx="10" cy="9.5" r="3.6" fill="#fff"/></g>
<g transform="translate(808.8,112.5) scale(1.080,1.010)"><path d="M10 0C4.5 0 0 4.3 0 9.8C0 16.8 10 29 10 29S20 16.8 20 9.8C20 4.3 15.5 0 10 0Z" fill="#f29900"/><circle cx="10" cy="9.5" r="3.6" fill="#fff"/></g>
<g transform="translate(833.4,271.3) scale(1.005,1.010)"><path d="M10 0C4.5 0 0 4.3 0 9.8C0 16.8 10 29 10 29S20 16.8 20 9.8C20 4.3 15.5 0 10 0Z" fill="#f29900"/><path d="M6.5 4v5.5c0 1.2 .8 2 1.8 2V17M6.5 4v4M8.3 4v4M10 4v5.5c0 1.2-.8 2-1.7 2M13.5 4c-1.5 .5-2 2.5-2 5h2v8" stroke="#fff" stroke-width="1.6" fill="none"/></g>
<g transform="translate(1104.8,255.9) scale(1.075,1.010)"><path d="M10 0C4.5 0 0 4.3 0 9.8C0 16.8 10 29 10 29S20 16.8 20 9.8C20 4.3 15.5 0 10 0Z" fill="#7986cb"/><text x="10" y="15" font-size="15" font-weight="bold" fill="#fff" text-anchor="middle">$</text></g>
<g transform="translate(1158.7,161.9) scale(1.005,1.062)"><path d="M10 0C4.5 0 0 4.3 0 9.8C0 16.8 10 29 10 29S20 16.8 20 9.8C20 4.3 15.5 0 10 0Z" fill="#78909c"/><path d="M4.5 6.5q2.8-1 5.5 1v8q-2.7-2-5.5-1zM15.5 6.5q-2.8-1-5.5 1v8q2.7-2 5.5-1z" fill="#fff"/></g>
<g transform="translate(776.0,295.0) scale(1.000,1.000)"><path d="M10 0C4.5 0 0 4.3 0 9.8C0 16.8 10 29 10 29S20 16.8 20 9.8C20 4.3 15.5 0 10 0Z" fill="#f29900"/><circle cx="10" cy="9.5" r="3.6" fill="#fff"/></g>
<circle cx="678.1" cy="190.79999999999995" r="7.2" fill="#1a73e8" stroke="#fff" stroke-width="0.5"/>
<circle cx="724.5" cy="167.70000000000005" r="8.3" fill="#1a73e8" stroke="#3c4043" stroke-width="1.6"/>
<circle cx="697.5" cy="204.70000000000005" r="8.3" fill="#1a73e8" stroke="#3c4043" stroke-width="1.6"/>
<rect x="10" y="12" width="40" height="80" rx="2" fill="#fff" filter="url(#shd)"/>
<path d="M16 52h30" stroke="#e0e0e0" stroke-width="1"/>
<path d="M21 31.5h18M30 22.5v18M21 72h18" stroke="#666" stroke-width="3.6"/>
<rect x="1010" y="11.5" width="168" height="39.5" rx="2" fill="#fff" filter="url(#shd)"/>
<path d="M1079.2 11.5v39.5" stroke="#ebebeb" stroke-width="1"/>
<text x="1027.7" y="37.5" font-size="18" fill="#000" stroke="#000" stroke-width="0.45" textLength="34.5" lengthAdjust="spacingAndGlyphs">Map</text>
<text x="1097" y="37.5" font-size="18" fill="#565656" textLength="64.2" lengthAdjust="spacingAndGlyphs">Satellite</text>
<rect x="1138" y="71" width="40" height="39.5" rx="2" fill="#fff" filter="url(#shd)"/>
<path d="M1149.5 88v-4h4M1161.5 84h4v4M1165.5 95v4h-4M1153.5 99h-4v-4" fill="none" stroke="#666" stroke-width="2.2"/>
<text x="6.5" y="293" font-size="21" font-weight="normal" stroke="#fff" stroke-width="2" paint-order="stroke" textLength="61" lengthAdjust="spacingAndGlyphs"><tspan fill="#4285f4">G</tspan><tspan fill="#ea4335">o</tspan><tspan fill="#fbbc05">o</tspan><tspan fill="#4285f4">g</tspan><tspan fill="#34a853">l</tspan><tspan fill="#ea4335">e</tspan></text>
<rect x="937" y="287" width="251" height="14" fill="#f5f5f5" fill-opacity="0.75"/>
<text x="941" y="297" font-size="10" fill="#222" textLength="74" lengthAdjust="spacingAndGlyphs">Map data ©2021</text>
<text x="1027.5" y="297" font-size="10" fill="#222" textLength="59.5" lengthAdjust="spacingAndGlyphs">Terms of Use</text>
<text x="1098.5" y="297" font-size="10" fill="#222" textLength="83" lengthAdjust="spacingAndGlyphs">Report a map error</text>
</svg>
 <div class="abs" style="left:276px;top:691px;width:1188px;height:460px;border-left:1px solid #e6e6e6;border-top:1px solid #e6e6e6"></div>
 <div class="abs" style="left:276px;top:737px;width:1188px;height:2px;background:#d0d0d0"></div>
 <div class="abs" style="left:586px;top:691px;width:1px;height:460px;background:#e8e8e8"></div>
 <div class="abs" style="left:767px;top:691px;width:1px;height:460px;background:#e8e8e8"></div>
 <div class="abs" style="left:1015px;top:691px;width:1px;height:460px;background:#e8e8e8"></div>
 <div class="abs" style="left:1108px;top:691px;width:1px;height:460px;background:#e8e8e8"></div>
 <div class="abs" style="left:1227px;top:691px;width:1px;height:460px;background:#e8e8e8"></div>
 <div class="t" style="left:289px;top:707.2px;font-size:14.6px;transform:scaleX(0.9454);transform-origin:0 0;color:#262e38;-webkit-text-stroke:0.5px #262e38">Quote</div>
 <svg class="abs" style="left:565.0px;top:708px" width="13" height="13" viewBox="0 0 13 13"><path d="M3.5 12V1.5M1 4l2.5-2.5L6 4M9.5 1v10.5M7 9l2.5 2.5L12 9" fill="none" stroke="#c4c4c4" stroke-width="1"/></svg>
 <div class="t" style="left:599px;top:707.2px;font-size:14.6px;transform:scaleX(0.9610);transform-origin:0 0;color:#262e38;-webkit-text-stroke:0.5px #262e38">Name / Description</div>
 <svg class="abs" style="left:746.0px;top:708px" width="13" height="13" viewBox="0 0 13 13"><path d="M3.5 12V1.5M1 4l2.5-2.5L6 4M9.5 1v10.5M7 9l2.5 2.5L12 9" fill="none" stroke="#c4c4c4" stroke-width="1"/></svg>
 <div class="t" style="left:780px;top:707.2px;font-size:14.6px;transform:scaleX(0.9746);transform-origin:0 0;color:#262e38;-webkit-text-stroke:0.5px #262e38">Address</div>
 <svg class="abs" style="left:994.0px;top:708px" width="13" height="13" viewBox="0 0 13 13"><path d="M3.5 12V1.5M1 4l2.5-2.5L6 4M9.5 1v10.5M7 9l2.5 2.5L12 9" fill="none" stroke="#c4c4c4" stroke-width="1"/></svg>
 <div class="t" style="left:1028px;top:707.2px;font-size:14.6px;transform:scaleX(0.9664);transform-origin:0 0;color:#262e38;-webkit-text-stroke:0.5px #262e38">Status</div>
 <svg class="abs" style="left:1087.0px;top:708px" width="13" height="13" viewBox="0 0 13 13"><path d="M3.5 12V1.5M1 4l2.5-2.5L6 4M9.5 1v10.5M7 9l2.5 2.5L12 9" fill="none" stroke="#c4c4c4" stroke-width="1"/></svg>
 <div class="t" style="left:1121px;top:707.2px;font-size:14.6px;transform:scaleX(0.9977);transform-origin:0 0;color:#262e38;-webkit-text-stroke:0.5px #262e38">Amount</div>
 <svg class="abs" style="left:1206.0px;top:708px" width="13" height="13" viewBox="0 0 13 13"><path d="M3.5 12V1.5M1 4l2.5-2.5L6 4M9.5 1v10.5M7 9l2.5 2.5L12 9" fill="none" stroke="#c4c4c4" stroke-width="1"/></svg>
 <svg class="abs" style="left:1443.0px;top:708px" width="13" height="13" viewBox="0 0 13 13"><path d="M3.5 12V1.5M1 4l2.5-2.5L6 4M9.5 1v10.5M7 9l2.5 2.5L12 9" fill="none" stroke="#c4c4c4" stroke-width="1"/></svg>
 <div class="abs" style="left:277px;top:784.2px;width:1187px;height:1px;background:#e8e8e8"></div>
 <div class="t" style="left:289px;top:753.6px;font-size:14.4px;transform:scaleX(0.9868);transform-origin:0 0;color:#333d49"><span class="lk">Quote #114575</span> (Recurring)</div>
 <div class="t" style="left:599px;top:753.6px;font-size:14.4px;transform:scaleX(0.9664);transform-origin:0 0;color:#333d49">Beatle Juice 2 ...</div>
 <div class="t" style="left:780px;top:753.6px;font-size:14.4px;transform:scaleX(0.9794);transform-origin:0 0;color:#333d49">4220 Glasscott Xing, Hoov...</div>
 <div class="t" style="left:1028px;top:753.6px;font-size:14.4px;transform:scaleX(0.9610);transform-origin:0 0;color:#333d49">Open</div>
 <div class="t" style="left:1121px;top:753.6px;font-size:14.4px;transform:scaleX(1.0275);transform-origin:0 0;color:#333d49">$132.00</div>
 <div class="t" style="left:1240px;top:753.6px;font-size:14.4px;transform:scaleX(0.9610);transform-origin:0 0;color:#333d49"><span class="lk">Schedule Job</span> or <span class="lk">Cancel Quote</span></div>
 <div class="abs" style="left:277px;top:830.2px;width:1187px;height:1px;background:#e8e8e8"></div>
 <div class="t" style="left:289px;top:799.6px;font-size:14.4px;transform:scaleX(0.9868);transform-origin:0 0;color:#333d49"><span class="lk">Quote #114280</span> (Recurring)</div>
 <div class="t" style="left:599px;top:799.6px;font-size:14.4px;transform:scaleX(0.9610);transform-origin:0 0;color:#333d49">Carlos Mendez</div>
 <div class="t" style="left:780px;top:799.6px;font-size:14.4px;transform:scaleX(0.9748);transform-origin:0 0;color:#333d49">123 Main Street, Hoover A...</div>
 <div class="t" style="left:1028px;top:799.6px;font-size:14.4px;transform:scaleX(0.9610);transform-origin:0 0;color:#333d49">Open</div>
 <div class="t" style="left:1121px;top:799.6px;font-size:14.4px;transform:scaleX(1.0275);transform-origin:0 0;color:#333d49">$501.60</div>
 <div class="t" style="left:1240px;top:799.6px;font-size:14.4px;transform:scaleX(0.9610);transform-origin:0 0;color:#333d49"><span class="lk">Schedule Job</span> or <span class="lk">Cancel Quote</span></div>
 <div class="abs" style="left:277px;top:876.2px;width:1187px;height:1px;background:#e8e8e8"></div>
 <div class="t" style="left:289px;top:845.6px;font-size:14.4px;transform:scaleX(0.9911);transform-origin:0 0;color:#333d49"><span class="lk">Quote #112989</span> (One Time)</div>
 <div class="t" style="left:599px;top:845.6px;font-size:14.4px;transform:scaleX(0.9610);transform-origin:0 0;color:#333d49">- Complicated O...</div>
 <div class="t" style="left:780px;top:845.6px;font-size:14.4px;transform:scaleX(0.9736);transform-origin:0 0;color:#333d49">4220 Glasscott Xingz, Hoo...</div>
 <div class="t" style="left:1028px;top:845.6px;font-size:14.4px;transform:scaleX(0.9610);transform-origin:0 0;color:#333d49">Pending</div>
 <div class="t" style="left:1121px;top:845.6px;font-size:14.4px;transform:scaleX(1.0240);transform-origin:0 0;color:#333d49">$1,936.00</div>
 <div class="t" style="left:1240px;top:845.6px;font-size:14.4px;transform:scaleX(0.9610);transform-origin:0 0;color:#333d49"><span class="lk">Schedule Job</span> or <span class="lk">Cancel Quote</span></div>
 <div class="abs" style="left:277px;top:922.2px;width:1187px;height:1px;background:#e8e8e8"></div>
 <div class="t" style="left:289px;top:891.6px;font-size:14.4px;transform:scaleX(0.9928);transform-origin:0 0;color:#333d49"><span class="lk">Quote #111749</span> (Recurring)</div>
 <div class="t" style="left:599px;top:891.6px;font-size:14.4px;transform:scaleX(0.9610);transform-origin:0 0;color:#333d49">Aaron Wize</div>
 <div class="t" style="left:780px;top:891.6px;font-size:14.4px;transform:scaleX(0.9736);transform-origin:0 0;color:#333d49">4220 Glasscott Xingz, Hoo...</div>
 <div class="t" style="left:1028px;top:891.6px;font-size:14.4px;transform:scaleX(0.9610);transform-origin:0 0;color:#333d49">Open</div>
 <div class="t" style="left:1121px;top:891.6px;font-size:14.4px;transform:scaleX(1.0250);transform-origin:0 0;color:#333d49">$0.00</div>
 <div class="t" style="left:1240px;top:891.6px;font-size:14.4px;transform:scaleX(0.9610);transform-origin:0 0;color:#333d49"><span class="lk">Schedule Job</span> or <span class="lk">Cancel Quote</span></div>
 <div class="abs" style="left:277px;top:968.2px;width:1187px;height:1px;background:#e8e8e8"></div>
 <div class="t" style="left:289px;top:937.6px;font-size:14.4px;transform:scaleX(0.9807);transform-origin:0 0;color:#333d49"><span class="lk">Quote #109129</span> (Recurring)</div>
 <div class="bdg" style="left:495.1px;top:935.2px;width:73.5px">Maintenance</div>
 <div class="t" style="left:599px;top:937.6px;font-size:14.4px;transform:scaleX(0.9610);transform-origin:0 0;color:#333d49">Krafty Home Bui...</div>
 <div class="t" style="left:780px;top:937.6px;font-size:14.4px;transform:scaleX(0.9794);transform-origin:0 0;color:#333d49">4265 Glasscott Xing, Hoov...</div>
 <div class="t" style="left:1028px;top:937.6px;font-size:14.4px;transform:scaleX(0.9610);transform-origin:0 0;color:#333d49">Open</div>
 <div class="t" style="left:1121px;top:937.6px;font-size:14.4px;transform:scaleX(1.0265);transform-origin:0 0;color:#333d49">$93.50</div>
 <div class="t" style="left:1240px;top:937.6px;font-size:14.4px;transform:scaleX(0.9610);transform-origin:0 0;color:#333d49"><span class="lk">Schedule Job</span> or <span class="lk">Cancel Quote</span></div>
 <div class="abs" style="left:277px;top:1014.2px;width:1187px;height:1px;background:#e8e8e8"></div>
 <div class="t" style="left:289px;top:983.6px;font-size:14.4px;transform:scaleX(0.9807);transform-origin:0 0;color:#333d49"><span class="lk">Quote #109128</span> (Recurring)</div>
 <div class="bdg" style="left:495.1px;top:981.2px;width:73.5px">Maintenance</div>
 <div class="t" style="left:599px;top:983.6px;font-size:14.4px;transform:scaleX(0.9610);transform-origin:0 0;color:#333d49">Rick Fowler</div>
 <div class="t" style="left:780px;top:983.6px;font-size:14.4px;transform:scaleX(0.9707);transform-origin:0 0;color:#333d49">123 Main Street, Birmingh...</div>
 <div class="t" style="left:1028px;top:983.6px;font-size:14.4px;transform:scaleX(0.9610);transform-origin:0 0;color:#333d49">Open</div>
 <div class="t" style="left:1121px;top:983.6px;font-size:14.4px;transform:scaleX(1.0275);transform-origin:0 0;color:#333d49">$108.00</div>
 <div class="t" style="left:1240px;top:983.6px;font-size:14.4px;transform:scaleX(0.9610);transform-origin:0 0;color:#333d49"><span class="lk">Schedule Job</span> or <span class="lk">Cancel Quote</span></div>
 <div class="abs" style="left:277px;top:1060.2px;width:1187px;height:1px;background:#e8e8e8"></div>
 <div class="t" style="left:289px;top:1029.6px;font-size:14.4px;transform:scaleX(0.9851);transform-origin:0 0;color:#333d49"><span class="lk">Quote #106075</span> (One Time)</div>
 <div class="bdg" style="left:505.1px;top:1027.2px;width:63.5px">Landscape</div>
 <div class="t" style="left:599px;top:1029.6px;font-size:14.4px;transform:scaleX(0.9610);transform-origin:0 0;color:#333d49">Krafty Home Bui...</div>
 <div class="t" style="left:780px;top:1029.6px;font-size:14.4px;transform:scaleX(0.9748);transform-origin:0 0;color:#333d49">123 Main Street, Hoover A...</div>
 <div class="t" style="left:1028px;top:1029.6px;font-size:14.4px;transform:scaleX(0.9610);transform-origin:0 0;color:#333d49">Open</div>
 <div class="t" style="left:1121px;top:1029.6px;font-size:14.4px;transform:scaleX(1.0240);transform-origin:0 0;color:#333d49">$3,722.41</div>
 <div class="t" style="left:1240px;top:1029.6px;font-size:14.4px;transform:scaleX(0.9610);transform-origin:0 0;color:#333d49"><span class="lk">Schedule Job</span> or <span class="lk">Cancel Quote</span></div>
 <div class="abs" style="left:277px;top:1106.2px;width:1187px;height:1px;background:#e8e8e8"></div>
 <div class="t" style="left:289px;top:1075.6px;font-size:14.4px;transform:scaleX(0.9851);transform-origin:0 0;color:#333d49"><span class="lk">Quote #105291</span> (One Time)</div>
 <div class="bdg" style="left:498.1px;top:1073.2px;width:70.5px">Waterscape</div>
 <div class="t" style="left:599px;top:1075.6px;font-size:14.4px;transform:scaleX(0.9610);transform-origin:0 0;color:#333d49">Bill Freeman</div>
 <div class="t" style="left:780px;top:1075.6px;font-size:14.4px;transform:scaleX(0.9748);transform-origin:0 0;color:#333d49">123 Main Street, Hoover A...</div>
 <div class="t" style="left:1028px;top:1075.6px;font-size:14.4px;transform:scaleX(0.9610);transform-origin:0 0;color:#333d49">Open</div>
 <div class="t" style="left:1121px;top:1075.6px;font-size:14.4px;transform:scaleX(1.0250);transform-origin:0 0;color:#333d49">$13,120.80</div>
 <div class="t" style="left:1240px;top:1075.6px;font-size:14.4px;transform:scaleX(0.9610);transform-origin:0 0;color:#333d49"><span class="lk">Schedule Job</span> or <span class="lk">Cancel Quote</span></div>
 <div class="abs" style="left:277px;top:1152.2px;width:1187px;height:1px;background:#e8e8e8"></div>
 <div class="t" style="left:289px;top:1121.6px;font-size:14.4px;transform:scaleX(0.9851);transform-origin:0 0;color:#333d49"><span class="lk">Quote #105290</span> (One Time)</div>
 <div class="bdg" style="left:505.1px;top:1119.2px;width:63.5px">Landscape</div>
 <div class="t" style="left:599px;top:1121.6px;font-size:14.4px;transform:scaleX(0.9637);transform-origin:0 0;color:#333d49">Justin Thomas</div>
 <div class="t" style="left:780px;top:1121.6px;font-size:14.4px;transform:scaleX(0.9833);transform-origin:0 0;color:#333d49">PO Box 4010, Opelika AL 3...</div>
 <div class="t" style="left:1028px;top:1121.6px;font-size:14.4px;transform:scaleX(0.9610);transform-origin:0 0;color:#333d49">Open</div>
 <div class="t" style="left:1121px;top:1121.6px;font-size:14.4px;transform:scaleX(1.0240);transform-origin:0 0;color:#333d49">$8,160.90</div>
 <div class="t" style="left:1240px;top:1121.6px;font-size:14.4px;transform:scaleX(0.9610);transform-origin:0 0;color:#333d49"><span class="lk">Schedule Job</span> or <span class="lk">Cancel Quote</span></div>
<div class="abs" style="left:1504px;top:141px;width:1px;height:999px;background:#d3d4d7"></div>
</body></html>
